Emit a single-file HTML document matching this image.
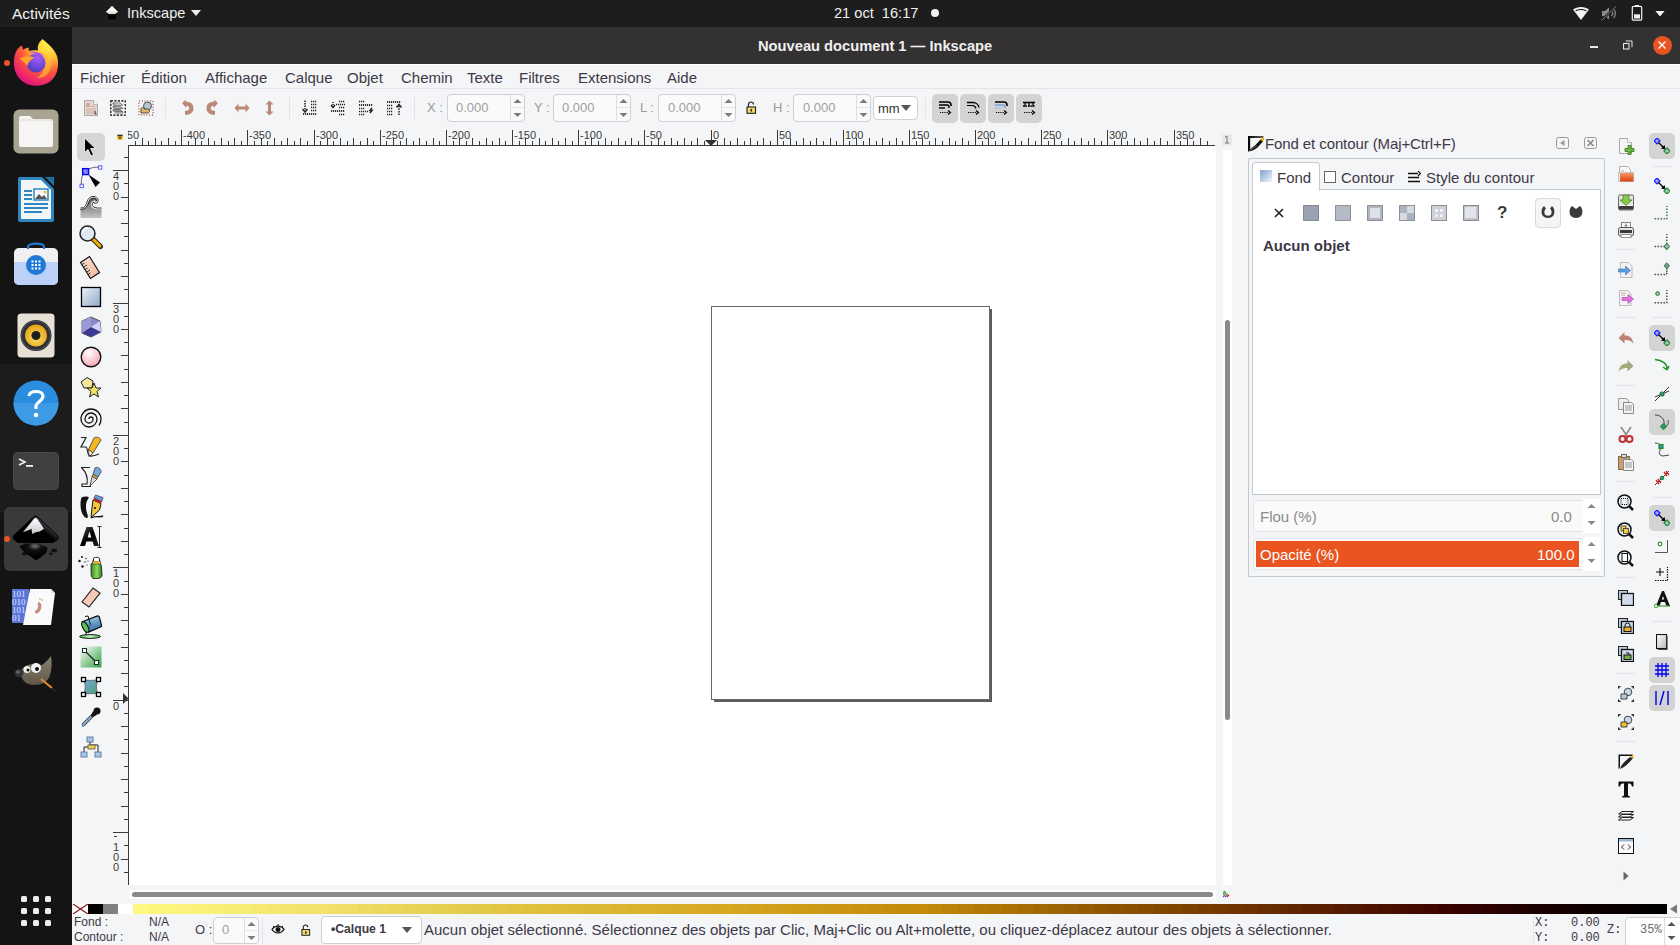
<!DOCTYPE html>
<html><head><meta charset="utf-8">
<style>
*{margin:0;padding:0;box-sizing:border-box}
html,body{width:1680px;height:945px;overflow:hidden;background:#f4f5f7;font-family:"Liberation Sans",sans-serif}
.a{position:absolute;display:block}
.t{position:absolute;white-space:pre;line-height:1}
.menu{font-size:15px;color:#3d3846;top:69.5px}
.inp{position:absolute;background:#fafafb;border:1px solid #cdd0d4;border-radius:4px}
.btn{position:absolute;background:#d3d3d3;border-radius:5px}
.sepv{position:absolute;width:1px;background:#e3e4e7}
.seph{position:absolute;height:1px;background:#e3e4e7}
</style></head>
<body>
<div class="a" style="left:0;top:0;width:1680px;height:27px;background:#1d1d1d"></div>
<div class="a" style="left:0;top:27px;width:72px;height:918px;background:#141414"></div>
<div class="a" style="left:72px;top:27px;width:1608px;height:37px;background:#333132"></div>
<div class="t" style="left:12px;top:6px;font-size:15.5px;color:#f0f0f0">Activités</div>
<div class="t" style="left:127px;top:6px;font-size:14.6px;color:#f0f0f0">Inkscape</div>
<svg class="a" style="left:104px;top:5px" width="16" height="16" viewBox="0 0 16 16"><path d="M8,1 L14,7 L11,9 L5,9 L2,7 Z" fill="#d8d8d8"/><path d="M8,1 L14,7 L12,8 C10,6 6,6 4,8 L2,7 Z" fill="#f8f8f8"/><path d="M2,7 L5,10 L11,10 L14,7 L12,12 L4,12 Z" fill="#000"/><ellipse cx="8" cy="13" rx="4" ry="1.5" fill="#000"/></svg>
<svg class="a" style="left:191px;top:10px" width="10" height="6" viewBox="0 0 10 6"><path d="M0,0 H10 L5,6 Z" fill="#eee"/></svg>
<div class="t" style="left:834px;top:6px;font-size:14.6px;color:#f0f0f0">21 oct  16:17</div>
<div class="a" style="left:931px;top:9px;width:8px;height:8px;border-radius:50%;background:#f0f0f0"></div>
<svg class="a" style="left:1572px;top:6px" width="18" height="15" viewBox="0 0 18 15"><path d="M1,3.5 C5,0 13,0 17,3.5 L9,14 Z" fill="#f2f2f2"/><path d="M3.3,4.5 C6.5,2.5 11.5,2.5 14.7,4.5 L14,5.2 C11,3.6 7,3.6 4,5.2 Z" fill="#1d1d1d"/></svg>
<svg class="a" style="left:1601px;top:6px" width="16" height="15" viewBox="0 0 16 15"><path d="M1,5 H4 L8,1.5 V13.5 L4,10 H1 Z" fill="#8a8a8a"/><path d="M10.5,5 C12,6.5 12,8.5 10.5,10 M12.5,3 C15,5.5 15,9.5 12.5,12" stroke="#8a8a8a" stroke-width="1.2" fill="none"/><path d="M0.5,14.5 L15,0.5" stroke="#1d1d1d" stroke-width="2.4"/><path d="M0.5,14.5 L15,0.5" stroke="#8a8a8a" stroke-width="0.9"/></svg>
<svg class="a" style="left:1631px;top:5px" width="12" height="16" viewBox="0 0 12 16"><rect x="4" y="0" width="4" height="1.6" fill="#f2f2f2"/><rect x="1.3" y="1.3" width="9.4" height="13.9" rx="1.3" fill="none" stroke="#f2f2f2" stroke-width="1.2"/><rect x="3" y="9.3" width="6" height="4.2" fill="#f2f2f2"/></svg>
<svg class="a" style="left:1655px;top:10.5px" width="10" height="5.5" viewBox="0 0 10 6"><path d="M0,0 H10 L5,6 Z" fill="#f2f2f2"/></svg>
<!-- title bar -->
<div class="t" style="left:758px;top:39px;font-size:14.7px;font-weight:bold;color:#f0f0f0">Nouveau document 1 — Inkscape</div>
<div class="a" style="left:1590px;top:46px;width:8px;height:2px;background:#e8e8e8"></div>
<svg class="a" style="left:1623px;top:40px" width="10" height="10" viewBox="0 0 10 10"><rect x="0.5" y="3.5" width="5.5" height="5.5" fill="none" stroke="#e8e8e8" stroke-width="1.1"/><path d="M2.8,1 H9 V7.2" fill="none" stroke="#e8e8e8" stroke-width="1"/></svg>
<div class="a" style="left:1652.5px;top:35.5px;width:19px;height:19px;border-radius:50%;background:#e95420"></div>
<svg class="a" style="left:1657px;top:40px" width="10" height="10" viewBox="0 0 10 10"><path d="M1.5,1.5 L8.5,8.5 M8.5,1.5 L1.5,8.5" stroke="#fff" stroke-width="1.3"/></svg>
<div class="a" style="left:0;top:364px;width:72px;height:149px;background:#1c1c1c"></div>
<div class="a" style="left:4px;top:507px;width:64px;height:64px;border-radius:6px;background:#3a3a3a"></div>
<div class="a" style="left:4px;top:60px;width:6px;height:6px;border-radius:50%;background:#e95420"></div>
<div class="a" style="left:4px;top:536px;width:6px;height:6px;border-radius:50%;background:#e95420"></div>
<!-- firefox -->
<svg class="a" style="left:0px;top:30px" width="72" height="64" viewBox="0 30 72 64">
<defs><radialGradient id="ffo" cx="0.75" cy="0.1" r="1.0"><stop offset="0" stop-color="#fff14a"/><stop offset="0.35" stop-color="#ffbd35"/><stop offset="0.6" stop-color="#ff5a36"/><stop offset="0.95" stop-color="#e6157e"/></radialGradient>
<radialGradient id="ffb" cx="0.6" cy="0.2" r="0.9"><stop offset="0" stop-color="#a45cff"/><stop offset="1" stop-color="#4a38b8"/></radialGradient></defs>
<path d="M42.5,39 C48,44 54,48 57,56 C60,66 57,78 48,83 C42,86 32,87 25,83 C17,78 13,70 14,60 C14.5,53 17,48 22,45.5 L23,50 C24,49 26,48 28.5,47.5 L29,51 C32,50 35,50 38,50.5 C37,46 39,42 42.5,39 Z" fill="url(#ffo)"/>
<path d="M40,52 C48,54 53,62 50,70 C48,75 43,78 37,78 C45,73 47,62 40,52 Z" fill="#ffb838" opacity="0.7"/>
<circle cx="36" cy="63" r="9.5" fill="url(#ffb)"/>
<path d="M19.5,58.5 C23,56 30,55 35,58 C31,59 28,62 27.5,66 C25,63 22,60 19.5,58.5 Z" fill="#ffa42a"/>
<path d="M30,52 C34,51 40,52 44,55.5 L40,55.5 C37,54 33,53 30,52Z" fill="#b54cf0"/>
</svg>
<!-- files -->
<svg class="a" style="left:13px;top:109px" width="46" height="45" viewBox="0 0 46 45">
<rect x="0.5" y="0.5" width="45" height="44" rx="6" fill="#a9a391"/>
<path d="M6,9 a2,2 0 0 1 2,-2 h9 l3,3 h18 a2,2 0 0 1 2,2 v24 a2,2 0 0 1 -2,2 h-30 a2,2 0 0 1 -2,-2 z" fill="#f6f5f3"/>
<path d="M6,11 h32 a2,2 0 0 1 2,2" fill="none" stroke="#dcd9d2" stroke-width="1"/>
</svg>
<!-- writer -->
<svg class="a" style="left:17px;top:176px" width="38" height="47" viewBox="0 0 38 47">
<path d="M3,1 h22 l12,12 v31 a2,2 0 0 1 -2,2 h-32 a2,2 0 0 1 -2,-2 v-41 a2,2 0 0 1 2,-2z" fill="#2e87c3"/>
<path d="M4,4 h20 l10,10 v29 h-30z" fill="#f3f5f7"/>
<path d="M28,1 h9 v9 z" fill="#1f6fa5"/>
<rect x="7" y="14" width="8" height="2" fill="#2e87c3"/><rect x="7" y="18" width="8" height="2" fill="#2e87c3"/><rect x="7" y="22" width="8" height="2" fill="#2e87c3"/>
<rect x="17" y="13" width="14" height="11" fill="#f8f8f8" stroke="#2e87c3" stroke-width="1.5"/>
<path d="M18,23 l4,-5 l3,3 l2,-2 l3,4z" fill="#555"/><circle cx="28" cy="16" r="1.6" fill="#f0c030"/>
<rect x="7" y="27" width="24" height="2" fill="#2e87c3"/><rect x="7" y="31" width="24" height="2" fill="#2e87c3"/><rect x="7" y="35" width="18" height="2" fill="#2e87c3"/>
</svg>
<!-- software -->
<svg class="a" style="left:13px;top:242px" width="46" height="44" viewBox="0 0 46 44">
<rect x="1" y="6" width="44" height="37" rx="5" fill="#f0f0f0"/>
<path d="M15,7 V5 C15,0.5 31,0.5 31,5 V7" fill="none" stroke="#1e7ad6" stroke-width="2.2"/>
<path d="M1,20 h44 v18 a5,5 0 0 1 -5,5 h-34 a5,5 0 0 1 -5,-5z" fill="#bcd0f8"/>
<circle cx="23" cy="23" r="10" fill="#1e7ad6"/>
<g fill="#fff"><rect x="18.5" y="18.5" width="2" height="2"/><rect x="22" y="18.5" width="2" height="2"/><rect x="25.5" y="18.5" width="2" height="2"/><rect x="18.5" y="22" width="2" height="2"/><rect x="22" y="22" width="2" height="2"/><rect x="25.5" y="22" width="2" height="2"/><rect x="18.5" y="25.5" width="2" height="2"/><rect x="22" y="25.5" width="2" height="2"/><rect x="25.5" y="25.5" width="2" height="2"/></g>
</svg>
<!-- rhythmbox -->
<svg class="a" style="left:17px;top:313px" width="38" height="45" viewBox="0 0 38 45">
<rect x="0.5" y="0.5" width="37" height="44" rx="4" fill="#e6e1d4"/>
<defs><radialGradient id="rbg" cx="0.5" cy="0.6" r="0.6"><stop offset="0" stop-color="#ffe070"/><stop offset="1" stop-color="#e0a010"/></radialGradient></defs>
<circle cx="19" cy="22.5" r="15.5" fill="#2e2e34"/>
<circle cx="19" cy="22.5" r="14.5" fill="none" stroke="#55555c" stroke-width="1"/>
<circle cx="19" cy="22.5" r="11" fill="url(#rbg)"/>
<circle cx="19" cy="22.5" r="4.5" fill="#1e1e1e"/>
</svg>
<!-- help -->
<svg class="a" style="left:13px;top:380px" width="46" height="46" viewBox="0 0 46 46">
<circle cx="23" cy="23" r="22.5" fill="#2b8de0"/>
<path d="M0.5,23 a22.5,22.5 0 0 0 45,0z" fill="#3d9be6"/>
<path d="M16,16 C16,10 30,10 30,16 C30,21 24,21 23,26 V29" fill="none" stroke="#fff" stroke-width="3.2"/>
<circle cx="23" cy="35" r="2.3" fill="#fff"/>
</svg>
<!-- terminal -->
<svg class="a" style="left:13px;top:452px" width="46" height="38" viewBox="0 0 46 38">
<rect x="0.5" y="0.5" width="45" height="37" rx="4" fill="#404040" stroke="#4a4a4a"/>
<path d="M6,7 l6,3 l-6,3" fill="none" stroke="#f2f2f2" stroke-width="1.6"/>
<rect x="13" y="13" width="7" height="1.8" fill="#f2f2f2"/>
</svg>
<!-- inkscape -->
<svg class="a" style="left:0px;top:500px" width="72" height="80" viewBox="0 500 72 80">
<defs><linearGradient id="ikr" x1="0.2" y1="0.8" x2="1" y2="0.2"><stop offset="0.5" stop-color="#000"/><stop offset="1" stop-color="#8a8ca8"/></linearGradient>
<linearGradient id="iks" x1="0" y1="0" x2="0" y2="1"><stop offset="0" stop-color="#fff"/><stop offset="1" stop-color="#c8c8cc"/></linearGradient>
<radialGradient id="ikp" cx="0.55" cy="0.15" r="0.6"><stop offset="0" stop-color="#777"/><stop offset="0.4" stop-color="#111"/><stop offset="1" stop-color="#000"/></radialGradient></defs>
<path d="M33.5,517 Q35.6,515 37.7,517 L57.5,535.5 Q59.5,538 57,540 L53,542.5 L18,542.5 L14.5,540 Q12,538 13.8,535.5 Z" fill="url(#ikr)" stroke="#000" stroke-width="1"/>
<path d="M34.2,518.5 Q35.6,517.3 37,518.5 L44,528.8 L39.8,531.4 L35.6,532.2 L32.2,533.9 L31.4,528.8 L29.7,529.7 L22.9,532.2 Z" fill="url(#iks)"/>
<path d="M19.5,546.2 L25.4,543.5 L38,543.5 L47.5,547.5 L46.6,552.5 L40.7,557.6 L35.6,560.6 L32.2,557.6 L28,555 L22.9,550.8 Z" fill="url(#ikp)"/>
<ellipse cx="24.6" cy="553.8" rx="2.8" ry="1.8" fill="#111"/><ellipse cx="54.2" cy="550.4" rx="3" ry="1.8" fill="#111"/><ellipse cx="50.8" cy="553.8" rx="1.8" ry="1.3" fill="#111"/>
</svg>
<!-- binary doc -->
<svg class="a" style="left:11px;top:588px" width="46" height="40" viewBox="0 0 46 40">
<rect x="1" y="1" width="17" height="34" fill="#5b74d8"/>
<g font-family="Liberation Serif" font-size="9" fill="#dfe6ff"><text x="1" y="9">101</text><text x="1" y="17">010</text><text x="1" y="25">101</text><text x="1" y="33">01</text></g>
<path d="M19,1 H40 L44,5 L40,37 H12z" fill="#fafafa"/>
<path d="M40,1 L44,5 H40z" fill="#ddd"/>
<path d="M28,14 c3,1 3,6 1,9 c-2,3 -5,3 -5,1 c0,-2 3,-2 3,-5 c0,-2 -1,-4 1,-5z" fill="#c58a7a"/>
<circle cx="29" cy="11" r="1" fill="#d8c090"/><circle cx="31" cy="12" r="1" fill="#d8c090"/>
</svg>
<!-- gimp -->
<svg class="a" style="left:12px;top:655px" width="46" height="38" viewBox="0 0 46 38">
<defs><linearGradient id="gmg" x1="0" y1="0" x2="0" y2="1"><stop offset="0" stop-color="#8a8270"/><stop offset="1" stop-color="#5e5648"/></linearGradient></defs>
<path d="M10,14 C14,9 22,8 30,10 C34,7 37,4 39,1 C40,8 40,14 38,20 C36,27 30,30 22,30 C15,30 10,26 9,20z" fill="url(#gmg)"/>
<ellipse cx="7" cy="18" rx="4.5" ry="4" fill="#333"/><ellipse cx="6" cy="17" rx="2" ry="1.5" fill="#666"/>
<circle cx="15" cy="14.5" r="3.5" fill="#eee"/><circle cx="24" cy="13" r="5" fill="#f4f4f4"/>
<circle cx="16" cy="15" r="1.5" fill="#111"/><circle cx="25" cy="14" r="2" fill="#111"/>
<path d="M29,24 L40,33" stroke="#e08a30" stroke-width="2.2"/><path d="M40,33 L44,37" stroke="#222" stroke-width="2.2"/>
</svg>
<!-- apps grid -->
<g></g>
<div class="a" style="left:21px;top:896px;width:6px;height:6px;border-radius:1.5px;background:#eeeeec"></div>
<div class="a" style="left:33px;top:896px;width:6px;height:6px;border-radius:1.5px;background:#eeeeec"></div>
<div class="a" style="left:45px;top:896px;width:6px;height:6px;border-radius:1.5px;background:#eeeeec"></div>
<div class="a" style="left:21px;top:908px;width:6px;height:6px;border-radius:1.5px;background:#eeeeec"></div>
<div class="a" style="left:33px;top:908px;width:6px;height:6px;border-radius:1.5px;background:#eeeeec"></div>
<div class="a" style="left:45px;top:908px;width:6px;height:6px;border-radius:1.5px;background:#eeeeec"></div>
<div class="a" style="left:21px;top:920px;width:6px;height:6px;border-radius:1.5px;background:#eeeeec"></div>
<div class="a" style="left:33px;top:920px;width:6px;height:6px;border-radius:1.5px;background:#eeeeec"></div>
<div class="a" style="left:45px;top:920px;width:6px;height:6px;border-radius:1.5px;background:#eeeeec"></div>
<div class="a" style="left:72px;top:64px;width:1608px;height:1px;background:#ffffff"></div>
<div class="a" style="left:72px;top:88px;width:1608px;height:1px;background:#e4e5e8"></div>
<div class="t menu" style="left:80px">Fichier</div>
<div class="t menu" style="left:141px">Édition</div>
<div class="t menu" style="left:205px">Affichage</div>
<div class="t menu" style="left:285px">Calque</div>
<div class="t menu" style="left:347px">Objet</div>
<div class="t menu" style="left:401px">Chemin</div>
<div class="t menu" style="left:467px">Texte</div>
<div class="t menu" style="left:519px">Filtres</div>
<div class="t menu" style="left:578px">Extensions</div>
<div class="t menu" style="left:667px">Aide</div>
<!-- toolbar icons -->
<svg class="a" style="left:83px;top:100px" width="16" height="16" viewBox="0 0 16 16"><path d="M1.5,0.5 h9 l4,4 v11 h-13z" fill="#e9d6cd" stroke="#a9a9a9"/><path d="M10.5,0.5 v4 h4" fill="#fff" stroke="#b0b0b0"/><g fill="#c9aea2"><rect x="3" y="3" width="4" height="4"/><rect x="8" y="6" width="4" height="1"/><rect x="3" y="8.5" width="10" height="1"/><rect x="3" y="10.5" width="10" height="1"/><rect x="3" y="12.5" width="8" height="1"/></g><path d="M12,11 v3 h1.5" stroke="#333" fill="none"/></svg>
<svg class="a" style="left:110px;top:100px" width="16" height="16" viewBox="0 0 16 16"><defs><linearGradient id="slb" x1="0" y1="0" x2="0" y2="1"><stop offset="0" stop-color="#fff"/><stop offset="1" stop-color="#8a8a8a"/></linearGradient></defs><rect x="0.8" y="0.8" width="14.4" height="14.4" fill="none" stroke="#000" stroke-width="1.2" stroke-dasharray="2.2,1.3"/><path d="M3,3 H10 L12.8,5.2 H5.8z M3,6.3 H10 L12.8,8.5 H5.8z M3,9.6 H10 L12.8,11.8 H5.8z" fill="url(#slb)" stroke="#555" stroke-width="0.8"/><path d="M3,3 V4.3 L5.8,6.5 M3,6.3 V7.6 L5.8,9.8 M3,9.6 V10.9 L5.8,13.1 H12.8 V11.8" fill="none" stroke="#666" stroke-width="0.8"/></svg>
<svg class="a" style="left:138px;top:100px" width="16" height="16" viewBox="0 0 16 16"><rect x="1" y="1" width="14" height="14" fill="none" stroke="#8b1010" stroke-width="1" stroke-dasharray="1,1.8"/><circle cx="9.5" cy="6" r="4" fill="#b7c4d4" stroke="#444" stroke-width="0.9"/><path d="M3,12 v-3 c0,-2 3,-2 3,0 h4 c2,0 2,4 0,4 h-7z" fill="#d8b860" stroke="#444" stroke-width="0.9"/></svg>
<div class="sepv" style="left:165px;top:97px;height:22px"></div>
<svg class="a" style="left:180px;top:99px" width="14" height="17" viewBox="0 0 14 17" opacity="0.78"><path d="M2,4 l4,-3.5 v2.2 c5,0 7.5,2.5 7.5,6.5 s-3,6.5 -7.5,6.5 h-1 v-4 h1.2 c2,0 3,-1 3,-2.5 s-1,-2.5 -3,-2.5 v2.2z" fill="#b06a55"/></svg>
<svg class="a" style="left:206px;top:99px" width="14" height="17" viewBox="0 0 14 17" opacity="0.78"><path d="M12,4 l-4,-3.5 v2.2 c-5,0 -7.5,2.5 -7.5,6.5 s3,6.5 7.5,6.5 h1 v-4 h-1.2 c-2,0 -3,-1 -3,-2.5 s1,-2.5 3,-2.5 v2.2z" fill="#b06a55"/></svg>
<svg class="a" style="left:234px;top:103px" width="16" height="10" viewBox="0 0 16 10" opacity="0.78"><path d="M0.5,5 l4,-4.5 v3 h7 v-3 l4,4.5 l-4,4.5 v-3 h-7 v3z" fill="#b06a55"/></svg>
<svg class="a" style="left:265px;top:100px" width="9" height="16" viewBox="0 0 9 16" opacity="0.78"><path d="M4.5,0.5 l4,4 h-2.5 v7 h2.5 l-4,4 l-4,-4 h2.5 v-7 h-2.5z" fill="#b06a55"/></svg>
<div class="sepv" style="left:289px;top:97px;height:22px"></div>
<svg class="a" style="left:302px;top:100px" width="16" height="16" viewBox="0 0 16 16" fill="none" stroke="#222" stroke-width="1.5"><path d="M3,0.5 v10" stroke-dasharray="1.5,1"/><path d="M0.5,9 l2.5,3 l2.5,-3" /><path d="M9,1.5 h6 M9,4.5 h6 M9,7.5 h6 M9,10.5 h6" stroke-dasharray="1.2,0.8"/><path d="M1,14 h14" stroke="#333" stroke-width="2" stroke-dasharray="1.2,0.8"/></svg>
<svg class="a" style="left:330px;top:100px" width="16" height="16" viewBox="0 0 16 16" fill="none" stroke="#222" stroke-width="1.5"><path d="M9,1.5 h6 M6,4.5 h9 M9,7.5 h6 M9,14.5 h6" stroke-dasharray="1.2,0.8"/><path d="M3,2 v5" stroke-dasharray="1,1"/><path d="M1,5 l2,2.5 l2,-2.5"/><path d="M1,11 h14" stroke="#333" stroke-width="2" stroke-dasharray="1.2,0.8"/></svg>
<svg class="a" style="left:358px;top:100px" width="16" height="16" viewBox="0 0 16 16" fill="none" stroke="#222" stroke-width="1.5"><path d="M1,1.5 h6 M1,8.5 h6 M1,11.5 h9 M1,14.5 h6" stroke-dasharray="1.2,0.8"/><path d="M1,5 h14" stroke="#333" stroke-width="2" stroke-dasharray="1.2,0.8"/><path d="M12,13 l2,-2.5 l-2,0 l2,-2.5" /></svg>
<svg class="a" style="left:386px;top:100px" width="16" height="16" viewBox="0 0 16 16" fill="none" stroke="#222" stroke-width="1.5"><path d="M1,2 h14" stroke="#333" stroke-width="2" stroke-dasharray="1.2,0.8"/><path d="M1,5.5 h6 M1,8.5 h6 M1,11.5 h6 M1,14.5 h6" stroke-dasharray="1.2,0.8"/><path d="M13,6 v9.5" stroke-dasharray="1.5,1"/><path d="M10.5,7.5 l2.5,-3 l2.5,3"/></svg>
<div class="sepv" style="left:414px;top:97px;height:22px"></div>
<!-- XYWH -->
<div class="t" style="left:427px;top:101px;font-size:13px;color:#9a9a9a">X :</div>
<div class="inp" style="left:447px;top:94px;width:78px;height:28px"></div>
<div class="t" style="left:456px;top:101px;font-size:13px;color:#a0a0a0">0.000</div>
<div class="a" style="left:510px;top:95px;width:1px;height:25px;background:#dcdde0"></div>
<div class="a" style="left:511px;top:107px;width:13px;height:1px;background:#e6e7ea"></div>
<svg class="a" style="left:513px;top:98px" width="9" height="20" viewBox="0 0 9 20"><path d="M0.5,5 L4.5,1 L8.5,5z M0.5,15 L4.5,19 L8.5,15z" fill="#7b7b7b"/></svg>
<div class="t" style="left:534px;top:101px;font-size:13px;color:#9a9a9a">Y :</div>
<div class="inp" style="left:553px;top:94px;width:78px;height:28px"></div>
<div class="t" style="left:562px;top:101px;font-size:13px;color:#a0a0a0">0.000</div>
<div class="a" style="left:616px;top:95px;width:1px;height:25px;background:#dcdde0"></div>
<div class="a" style="left:617px;top:107px;width:13px;height:1px;background:#e6e7ea"></div>
<svg class="a" style="left:619px;top:98px" width="9" height="20" viewBox="0 0 9 20"><path d="M0.5,5 L4.5,1 L8.5,5z M0.5,15 L4.5,19 L8.5,15z" fill="#7b7b7b"/></svg>
<div class="t" style="left:640px;top:101px;font-size:13px;color:#9a9a9a">L :</div>
<div class="inp" style="left:658px;top:94px;width:78px;height:28px"></div>
<div class="t" style="left:668px;top:101px;font-size:13px;color:#a0a0a0">0.000</div>
<div class="a" style="left:721px;top:95px;width:1px;height:25px;background:#dcdde0"></div>
<div class="a" style="left:722px;top:107px;width:13px;height:1px;background:#e6e7ea"></div>
<svg class="a" style="left:724px;top:98px" width="9" height="20" viewBox="0 0 9 20"><path d="M0.5,5 L4.5,1 L8.5,5z M0.5,15 L4.5,19 L8.5,15z" fill="#7b7b7b"/></svg>
<svg class="a" style="left:746px;top:101px" width="11" height="13" viewBox="0 0 11 13"><path d="M2.5,6 v-2.5 a2.5,2.5 0 0 1 5,0" fill="none" stroke="#222" stroke-width="1.2"/><rect x="1" y="6" width="8.5" height="6.3" fill="#f5dc6a" stroke="#222" stroke-width="1.1"/><rect x="4.5" y="8" width="1.6" height="2.5" fill="#222"/></svg>
<div class="t" style="left:773px;top:101px;font-size:13px;color:#9a9a9a">H :</div>
<div class="inp" style="left:793px;top:94px;width:78px;height:28px"></div>
<div class="t" style="left:803px;top:101px;font-size:13px;color:#a0a0a0">0.000</div>
<div class="a" style="left:856px;top:95px;width:1px;height:25px;background:#dcdde0"></div>
<div class="a" style="left:857px;top:107px;width:13px;height:1px;background:#e6e7ea"></div>
<svg class="a" style="left:859px;top:98px" width="9" height="20" viewBox="0 0 9 20"><path d="M0.5,5 L4.5,1 L8.5,5z M0.5,15 L4.5,19 L8.5,15z" fill="#7b7b7b"/></svg>
<div class="a" style="left:873px;top:96px;width:45px;height:24px;background:#fff;border:1px solid #cdd0d4;border-radius:4px"></div>
<div class="t" style="left:878px;top:102px;font-size:13px;color:#333">mm</div>
<svg class="a" style="left:901px;top:105px" width="10" height="6" viewBox="0 0 10 6"><path d="M0,0 H10 L5,6 Z" fill="#555"/></svg>
<div class="sepv" style="left:925px;top:97px;height:22px"></div>
<div class="btn" style="left:932px;top:94px;width:26px;height:29px"></div>
<div class="btn" style="left:960px;top:94px;width:26px;height:29px"></div>
<div class="btn" style="left:988px;top:94px;width:26px;height:29px"></div>
<div class="btn" style="left:1016px;top:94px;width:26px;height:29px"></div>
<svg class="a" style="left:937px;top:100px" width="16" height="16" viewBox="0 0 16 16" fill="none" stroke="#000"><path d="M2,2 h9 a3,3 0 0 1 3,3 v1" stroke-width="1.6"/><path d="M2,5 h8 a2,2 0 0 1 2,2 v1" stroke-width="1.4"/><path d="M2,8 h6" stroke-width="1.4"/><path d="M3,12.5 h9" stroke-dasharray="1.2,1" stroke-width="1.2"/><path d="M11,10.5 l2.5,2 l-2.5,2" stroke-width="1.2"/></svg>
<svg class="a" style="left:965px;top:100px" width="16" height="16" viewBox="0 0 16 16" fill="none" stroke="#000"><path d="M2,2.5 h6 a6,6 0 0 1 6,5" stroke-width="1.3"/><path d="M2,5.5 h5 a4,4 0 0 1 4,3" stroke-width="1.2"/><path d="M3,12.5 h9" stroke-dasharray="1.2,1" stroke-width="1.2"/><path d="M11,10.5 l2.5,2 l-2.5,2" stroke-width="1.2"/></svg>
<svg class="a" style="left:993px;top:100px" width="16" height="16" viewBox="0 0 16 16" fill="none" stroke="#000"><path d="M2,2 h9 a3,3 0 0 1 3,3 v1" stroke-width="1.6"/><path d="M2,5 h8 a2,2 0 0 1 2,2 v1" stroke="#8fb0d8" stroke-width="2"/><path d="M2,8 h6" stroke="#aac4e4" stroke-width="1.4"/><path d="M3,12.5 h9" stroke-dasharray="1.2,1" stroke-width="1.2"/><path d="M11,10.5 l2.5,2 l-2.5,2" stroke-width="1.2"/></svg>
<svg class="a" style="left:1021px;top:100px" width="16" height="16" viewBox="0 0 16 16" fill="none" stroke="#000"><path d="M2,2.5 h12" stroke-width="1.6"/><path d="M2,6 h12" stroke-width="1.6" stroke-dasharray="1.5,1"/><path d="M4,2 v5 M8,2 v5 M12,2 v5" stroke-width="1.2"/><path d="M3,12.5 h9" stroke-dasharray="1.2,1" stroke-width="1.2"/><path d="M11,10.5 l2.5,2 l-2.5,2" stroke-width="1.2"/></svg>
<!-- canvas -->
<div class="a" style="left:128px;top:146px;width:1088px;height:739px;background:#fff"></div>
<div class="a" style="left:711px;top:306px;width:279px;height:394px;border:1px solid #666;background:#fff"></div>
<div class="a" style="left:990px;top:309px;width:2px;height:393px;background:#5c5c5c"></div>
<div class="a" style="left:714px;top:700px;width:276px;height:2px;background:#5c5c5c"></div>
<!-- corner lock icon -->
<svg class="a" style="left:117px;top:134px" width="6" height="6" viewBox="0 0 8 8"><rect x="0.5" y="1" width="7" height="6.5" fill="#f0a800"/><rect x="0.5" y="1" width="7" height="2" fill="#333"/><rect x="3" y="4" width="2" height="2.5" fill="#333"/></svg>
<!-- v scrollbar -->
<div class="a" style="left:1223px;top:150px;width:9px;height:735px;background:#fff"></div>
<div class="a" style="left:1225px;top:320px;width:5px;height:400px;border-radius:3px;background:#898989"></div>
<svg class="a" style="left:1221px;top:134px" width="12" height="12" viewBox="0 0 12 12"><rect x="1" y="0.5" width="10" height="11" rx="1" fill="#e8e8e8"/><path d="M4,3 l2,-1 v7 M4,9 h4" stroke="#777" fill="none"/></svg>
<!-- h scrollbar -->
<div class="a" style="left:129px;top:890px;width:1087px;height:9px;background:#fff"></div>
<div class="a" style="left:132px;top:892px;width:1081px;height:5px;border-radius:3px;background:#898989"></div>
<svg class="a" style="left:1223px;top:890px" width="8" height="8" viewBox="0 0 8 8"><circle cx="1.5" cy="1.5" r="0.8" fill="#20a040"/><circle cx="0.5" cy="2.5" r="0.8" fill="#20a040"/><circle cx="2.5" cy="2.5" r="0.8" fill="#40b040"/><circle cx="1.5" cy="3.5" r="0.8" fill="#30a050"/><circle cx="0.5" cy="4.5" r="0.8" fill="#20a0a0"/><circle cx="3.5" cy="3.5" r="0.8" fill="#a0b030"/><circle cx="2.5" cy="4.5" r="0.7" fill="#80a060"/><circle cx="4.5" cy="4.5" r="0.8" fill="#d06020"/><circle cx="1.5" cy="5.5" r="0.7" fill="#4080c0"/><circle cx="3.5" cy="5.5" r="0.8" fill="#c03060"/><circle cx="5.5" cy="5.5" r="0.8" fill="#d02030"/><circle cx="0.5" cy="6.5" r="0.8" fill="#2050c0"/><circle cx="2.5" cy="6.5" r="0.8" fill="#a030c0"/><circle cx="4.5" cy="6.5" r="0.8" fill="#c01060"/></svg>
<!-- toolbox -->
<div class="btn" style="left:77px;top:133px;width:28px;height:28px;background:#d5d5d5"></div>
<svg class="a" style="left:83px;top:137px" width="16" height="20" viewBox="0 0 16 20"><path d="M1.5,1 L1.5,15.5 L5,12.5 L8,19 L10.5,17.8 L7.6,11.5 L12.5,11.5 Z" fill="#000" stroke="#fff" stroke-width="0.8"/></svg>
<svg class="a" style="left:76px;top:162px" width="30" height="28" viewBox="76 162 30 28"><path d="M89,169 C92,167.5 95,167 98.5,167.2 M82.5,175 C81.5,178 81,181 81.5,184.5" fill="none" stroke="#555" stroke-width="0.9"/><rect x="82.7" y="168.7" width="5.8" height="5.8" fill="#9a9af0" stroke="#0000ff" stroke-width="1.5"/><path d="M84,173.5 L87.5,170" stroke="#4040c0" stroke-width="0.7"/><rect x="98.5" y="165.8" width="3.4" height="3.4" fill="none" stroke="#6060ff" stroke-width="1"/><rect x="80" y="184.2" width="3.4" height="3.4" fill="none" stroke="#6060ff" stroke-width="1"/><path d="M88.5,174.5 L100,182.5 L95.5,187 Z" fill="#000"/></svg>
<svg class="a" style="left:76px;top:192px" width="30" height="28" viewBox="76 192 30 28"><defs><linearGradient id="tw" x1="0" y1="0" x2="0" y2="1"><stop offset="0" stop-color="#555"/><stop offset="1" stop-color="#c4c4c4"/></linearGradient></defs><path d="M80.5,208 C84,208 86,206 87,202 C88,198 91,196 94,196.5 C98,197 99,200.5 97.5,202.5 C96,204 94,203.5 94,202 C92,202.5 91.5,205 93,206.5 C95,208.5 99,208 101.5,208 V218 H80.5z" fill="url(#tw)"/><path d="M80.5,208 C84,208 86,206 87,202 C88,198 91,196 94,196.5 C98,197 99,200.5 97.5,202.5 C96,204 94,203.5 94,202 C92,202.5 91.5,205 93,206.5 C95,208.5 99,208 101.5,208" fill="none" stroke="#fff" stroke-width="2.6"/><path d="M80.5,208 C84,208 86,206 87,202 C88,198 91,196 94,196.5 C98,197 99,200.5 97.5,202.5 C96,204 94,203.5 94,202 C92,202.5 91.5,205 93,206.5 C95,208.5 99,208 101.5,208" fill="none" stroke="#111" stroke-width="0.9"/><path d="M80.5,209.5 C84,209.5 87,207.5 88.5,203 C89.5,199.5 91.5,198 94,198.2 C96,198.5 97,199.5 96.5,201" fill="none" stroke="#111" stroke-width="0.8"/></svg>
<svg class="a" style="left:78px;top:224px" width="26" height="26" viewBox="0 0 26 26"><path d="M14.5,14.5 L22.5,22.5" stroke="#222" stroke-width="5" stroke-linecap="round"/><path d="M15.5,15.5 L22,22" stroke="#f5b000" stroke-width="3" stroke-linecap="round"/><circle cx="9.5" cy="9.5" r="7.5" fill="#dde8f0" stroke="#222" stroke-width="1.5"/><path d="M5,8 a4.5,4.5 0 0 1 4.5,-4" stroke="#fff" stroke-width="1.5" fill="none"/></svg>
<svg class="a" style="left:76px;top:252px" width="30" height="30" viewBox="76 252 30 30"><defs><linearGradient id="msg" x1="0" y1="0" x2="1" y2="1"><stop offset="0" stop-color="#fbe4d8"/><stop offset="1" stop-color="#f0b49a"/></linearGradient></defs><path d="M80.5,262.5 L89.5,256.5 L99.5,272.5 L90.5,278.5 Z" fill="url(#msg)" stroke="#111" stroke-width="1.2"/><path d="M82,264.5 l2.5,-1.5 M83.5,267 l3.5,-2 M85,269.5 l2.5,-1.5 M86.5,272 l3.5,-2 M88,274.5 l2.5,-1.5" stroke="#222" stroke-width="0.9"/></svg>
<svg class="a" style="left:80px;top:286px" width="22" height="22" viewBox="0 0 22 22"><defs><linearGradient id="rg" x1="0" y1="0" x2="1" y2="1"><stop offset="0" stop-color="#eef3f8"/><stop offset="1" stop-color="#8aa8c8"/></linearGradient></defs><rect x="1.5" y="1.5" width="19" height="19" fill="url(#rg)" stroke="#000" stroke-width="1.3"/></svg>
<svg class="a" style="left:80px;top:316px" width="22" height="22" viewBox="0 0 22 22"><path d="M2,5 L11,1 L20,5 L21,16 L11,21 L2,17z" fill="#8888c8" stroke="#555" stroke-width="1"/><path d="M11,11 L20,5 L21,16 L11,21z" fill="#d0d0f8"/><path d="M2,17 L11,11 L21,16 L11,21z" fill="#3a3a90"/><path d="M2,5 L11,1 L11,11 L2,17z" fill="#9a9ad8"/></svg>
<svg class="a" style="left:80px;top:346px" width="22" height="22" viewBox="0 0 22 22"><defs><radialGradient id="eg" cx="0.4" cy="0.3" r="0.8"><stop offset="0" stop-color="#fff"/><stop offset="1" stop-color="#f59aa8"/></radialGradient></defs><circle cx="11" cy="11" r="9.8" fill="url(#eg)" stroke="#111" stroke-width="1.4"/></svg>
<svg class="a" style="left:80px;top:376px" width="22" height="22" viewBox="0 0 22 22"><path d="M1,6 L7,1.5 L13,5 L12,12 L4,12z" fill="#f5e69a" stroke="#222" stroke-width="1"/><path d="M14,7 L16,12 L21,12 L17,15.5 L18.5,21 L14,18 L9.5,21 L11,15.5 L7,12 L12,12z" fill="#f0e060" stroke="#222" stroke-width="1"/></svg>
<svg class="a" style="left:80px;top:406px" width="23" height="23" viewBox="0 0 23 23"><path d="M9,13 A2,2 0 0 1 13,13 A4,4 0 0 1 5,13 A6,6 0 0 1 17,13 A8,8 0 0 1 1,13 A10,10 0 0 1 21,13 A11.5,11.5 0 0 1 19,19.5" fill="none" stroke="#111" stroke-width="1.3"/></svg>
<svg class="a" style="left:80px;top:436px" width="22" height="22" viewBox="0 0 22 22"><path d="M1,1.5 H6 L1,11 H6 C8,12 7,17 9,19.5 C11,21 14,20 19,18" fill="none" stroke="#222" stroke-width="1.2"/><path d="M14,2 C15,0.5 20,1 21,4 L13,17 L8.5,13.5z" fill="#f5b820" stroke="#333" stroke-width="0.8"/><path d="M8.5,13.5 L13,17 L9,20.5z" fill="#fff8e0" stroke="#333" stroke-width="0.8"/><path d="M9,20.5 L10,18.5 L11,19.5z" fill="#111"/></svg>
<svg class="a" style="left:80px;top:466px" width="22" height="22" viewBox="0 0 22 22"><path d="M1,1.5 H10 M1.5,1.5 C6,6 8,12 7,18 H2 V20.5 H11" fill="none" stroke="#222" stroke-width="1.2"/><path d="M15,2 C17,0.5 21,2 21,6 L18,11 L13,8.5z" fill="#78aad8" stroke="#335" stroke-width="0.8"/><path d="M13,8.5 L18,11 L17,13 L12,10.5z" fill="#f0c030" stroke="#333" stroke-width="0.7"/><path d="M12,10.5 L17,13 L10,20z" fill="#ddd" stroke="#333" stroke-width="0.8"/></svg>
<svg class="a" style="left:76px;top:494px" width="30" height="26" viewBox="76 494 30 26"><path d="M81.5,497.5 C84,496 88,496 89,497.5 C86,501 85,507 87,513 C88,516 88.5,518 86.5,518 C83,517 80.5,511 80.5,505 C80.5,501 81,499 81.5,497.5z" fill="#111"/><path d="M93,500 L101,503.5 L99.5,510 L91,517.5 L92,508z" fill="#f2c83a" stroke="#111" stroke-width="1"/><path d="M93,500 L101,503.5 L101.8,501.5 L94,498z" fill="#d42020"/><path d="M94,498 L101.8,501.5 L103,497.5 L95.5,495z" fill="#6a9cd0" stroke="#223" stroke-width="0.6"/><circle cx="95" cy="508" r="1" fill="#111"/><path d="M91,518 C95,515 99,518 103,516" fill="none" stroke="#111" stroke-width="1.4"/></svg>
<svg class="a" style="left:76px;top:524px" width="30" height="26" viewBox="76 524 30 26"><defs><linearGradient id="tag" x1="0" y1="0" x2="1" y2="1"><stop offset="0" stop-color="#555"/><stop offset="0.5" stop-color="#000"/><stop offset="1" stop-color="#222"/></linearGradient></defs><path d="M80,546 L86.5,527 H92.5 L99,546 H94 L92.6,541.5 H86.4 L85,546z M87.6,537.5 H91.4 L89.5,531.5z" fill="url(#tag)"/><path d="M97.5,526.5 H101.5 M99.5,526.5 V547.5 M97.5,547.5 H101.5" stroke="#111" stroke-width="0.9" fill="none"/></svg>
<svg class="a" style="left:76px;top:554px" width="30" height="26" viewBox="76 554 30 26"><defs><linearGradient id="spg" x1="0" y1="0" x2="1" y2="0"><stop offset="0" stop-color="#3a8a20"/><stop offset="0.55" stop-color="#8ad860"/><stop offset="1" stop-color="#2a7a18"/></linearGradient></defs><g fill="#111"><circle cx="82" cy="557" r="1"/><circle cx="79.5" cy="561" r="1.2"/><circle cx="82.5" cy="566.5" r="1.2"/><circle cx="86" cy="558.5" r="0.7"/><circle cx="85" cy="562" r="0.7"/><circle cx="88" cy="561" r="0.6"/><circle cx="87" cy="565" r="0.6"/></g><path d="M91,565 C91,563 93,562 95,562 H97 C100,562 101,564 101.5,567 L102,575 C102,577.5 100,578.5 97,578.5 H94 C92,578.5 91.5,577 91.2,575z" fill="url(#spg)" stroke="#222" stroke-width="0.9"/><rect x="92.5" y="561" width="8" height="3" fill="#f0c040" stroke="#333" stroke-width="0.6"/><path d="M93.5,561 V558.5 C93.5,557 99.5,557 99.5,558.5 V561" fill="#fff" stroke="#111" stroke-width="1"/></svg>
<svg class="a" style="left:80px;top:586px" width="22" height="22" viewBox="0 0 22 22"><path d="M2,16 L13,2 L20,7 L9,21z" fill="#f8c8b8" stroke="#222" stroke-width="1.2"/></svg>
<svg class="a" style="left:72px;top:600px" width="40" height="42" viewBox="72 600 40 42"><defs><linearGradient id="bkg" x1="0" y1="0" x2="0.3" y2="1"><stop offset="0" stop-color="#d8f0f8"/><stop offset="0.4" stop-color="#78b0d0"/><stop offset="1" stop-color="#3a6aa8"/></linearGradient><linearGradient id="bkp" x1="0" y1="0" x2="1" y2="0"><stop offset="0" stop-color="#48b048"/><stop offset="0.5" stop-color="#c8f0c8"/><stop offset="1" stop-color="#48b048"/></linearGradient></defs><path d="M82.3,621.7 L97.4,615.9 Q99,616 99.5,617.5 L101.6,625.5 Q101.8,626.5 100.5,627 L88.4,632.3 Z" fill="url(#bkg)" stroke="#000" stroke-width="1.1"/><ellipse cx="85.3" cy="627" rx="2.6" ry="5.8" transform="rotate(-28 85.3 627)" fill="#58c058" stroke="#000" stroke-width="1"/><path d="M85,616.5 L88,616 L90.5,624.5" fill="none" stroke="#111" stroke-width="1"/><circle cx="90.3" cy="625.3" r="1" fill="#555"/><path d="M86,632 C86.5,634 86,634.5 85,635" stroke="#000" stroke-width="1" fill="none"/><ellipse cx="90" cy="636.5" rx="10.5" ry="1.9" fill="url(#bkp)" stroke="#000" stroke-width="0.9"/></svg>
<svg class="a" style="left:80px;top:646px" width="22" height="22" viewBox="0 0 22 22"><defs><linearGradient id="gg" x1="0" y1="0" x2="1" y2="1"><stop offset="0" stop-color="#ffffff"/><stop offset="1" stop-color="#30a040"/></linearGradient></defs><rect x="0.5" y="0.5" width="21" height="21" fill="url(#gg)"/><path d="M5,5 L16,16" stroke="#222" stroke-width="1.2"/><rect x="2.5" y="2.5" width="4" height="4" fill="#fff" stroke="#222"/><rect x="14.5" y="14.5" width="4" height="4" fill="#fff" stroke="#222"/></svg>
<svg class="a" style="left:76px;top:672px" width="30" height="30" viewBox="76 672 30 30"><defs><linearGradient id="mg" x1="0" y1="0" x2="1" y2="1"><stop offset="0" stop-color="#78a8d8"/><stop offset="1" stop-color="#4aa070"/></linearGradient></defs><path d="M83.5,679.5 C88,681 93,680.5 98.5,679.5 C96,684 95.5,689 98.5,694.5 C94,693 89,693.5 83.5,694.5 C85.5,690 86,684.5 83.5,679.5 Z" fill="url(#mg)" stroke="#334" stroke-width="0.6"/><g fill="#fff" stroke="#000" stroke-width="1.3"><rect x="81.5" y="677.5" width="4" height="4"/><rect x="96.5" y="677.5" width="4" height="4"/><rect x="81.5" y="692.5" width="4" height="4"/><rect x="96.5" y="692.5" width="4" height="4"/></g></svg>
<svg class="a" style="left:80px;top:706px" width="22" height="22" viewBox="0 0 22 22"><path d="M3,19 L14,8" stroke="#333" stroke-width="3.5"/><path d="M3,19 L14,8" stroke="#8ab0d8" stroke-width="2"/><path d="M13,5 L17,9 L12,11 L11,10z" fill="#111"/><circle cx="17" cy="5" r="3.5" fill="#111"/><path d="M2,18 C1,20 2,21 3,21 C4,21 4,20 3,18z" fill="#5090c0"/></svg>
<svg class="a" style="left:80px;top:736px" width="22" height="22" viewBox="0 0 22 22"><rect x="7" y="1" width="6" height="5" fill="#a8c8e8" stroke="#4a6a90" stroke-width="0.8"/><path d="M10,6 V9 M4,11 V16 M18,9 V16 M10,9 H18 M4,11 H8" stroke="#222" fill="none"/><rect x="8" y="9" width="7" height="4" fill="#f0d040" stroke="#555" stroke-width="0.8"/><rect x="1" y="16" width="6" height="5" fill="#a8c8e8" stroke="#4a6a90" stroke-width="0.8"/><rect x="15" y="16" width="6" height="5" fill="#a8c8e8" stroke="#4a6a90" stroke-width="0.8"/></svg>
<!-- dock panel -->
<svg class="a" style="left:1248px;top:136px" width="17" height="16" viewBox="0 0 17 16"><defs><linearGradient id="fsg" x1="0" y1="0" x2="1" y2="0"><stop offset="0" stop-color="#000"/><stop offset="1" stop-color="#666"/></linearGradient></defs><path d="M0,0 H16 L14.5,2 H2.2 V13.5 L0,16z" fill="url(#fsg)"/><path d="M0.5,15.5 C3,12.5 5,10.5 7,9.5 L12.5,3.5 L15,5.5 L9.5,11.5 C8,13 5,14.5 0.5,15.5z" fill="#111"/><path d="M3,13.5 C5,12 7,11 9,10" stroke="#777" stroke-width="0.7" fill="none"/><path d="M12.5,3.5 L15.5,1.2 L16.5,2.5 L15,5.5z" fill="#f5a800"/></svg>
<div class="t" style="left:1265px;top:136px;font-size:15px;color:#3d3846;letter-spacing:-0.1px">Fond et contour (Maj+Ctrl+F)</div>
<svg class="a" style="left:1556px;top:137px" width="13" height="12" viewBox="0 0 13 12"><rect x="0.5" y="0.5" width="12" height="11" rx="2" fill="none" stroke="#999"/><path d="M4,6 L8.5,3 V9z" fill="#999"/></svg>
<svg class="a" style="left:1584px;top:137px" width="13" height="12" viewBox="0 0 13 12"><rect x="0.5" y="0.5" width="12" height="11" rx="2" fill="none" stroke="#999"/><path d="M3.5,3 L9.5,9 M9.5,3 L3.5,9" stroke="#888" stroke-width="1.6"/></svg>
<div class="a" style="left:1248px;top:158px;width:357px;height:419px;border:1px solid #c2c8d0;border-radius:1px"></div>
<div class="a" style="left:1252px;top:189px;width:349px;height:306px;background:#fff;border:1px solid #c2c8d0"></div>
<div class="a" style="left:1252px;top:162px;width:68px;height:29px;background:#fff;border:1px solid #c8cbd0;border-bottom:none;border-radius:4px 4px 0 0"></div>
<svg class="a" style="left:1260px;top:170px" width="13" height="13" viewBox="0 0 13 13"><defs><linearGradient id="fg" x1="0" y1="0" x2="1" y2="1"><stop offset="0" stop-color="#7fa0cc"/><stop offset="1" stop-color="#f4f7fb"/></linearGradient></defs><rect x="0" y="0" width="12" height="12" fill="url(#fg)"/></svg>
<div class="t" style="left:1277px;top:170px;font-size:15px;color:#3d3846">Fond</div>
<svg class="a" style="left:1324px;top:171px" width="12" height="12" viewBox="0 0 12 12"><rect x="0.5" y="0.5" width="11" height="11" fill="#fff" stroke="#666"/></svg>
<div class="t" style="left:1341px;top:170px;font-size:15px;color:#3d3846">Contour</div>
<svg class="a" style="left:1408px;top:171px" width="13" height="12" viewBox="0 0 13 12"><path d="M0,2.5 H10 M0,6.5 H11 M0,10.5 H12" stroke="#111" stroke-width="1.3"/><path d="M10,0 L12.5,2.5 L10,5" fill="none" stroke="#111" stroke-width="1.2"/></svg>
<div class="t" style="left:1426px;top:170px;font-size:15px;color:#3d3846">Style du contour</div>
<!-- fill buttons -->
<svg class="a" style="left:1274px;top:208px" width="10" height="10" viewBox="0 0 10 10"><path d="M1,1 L9,9 M9,1 L1,9" stroke="#222" stroke-width="1.6"/></svg>
<svg class="a" style="left:1303px;top:205px" width="240" height="16" viewBox="0 0 240 16">
<defs><pattern id="dith" width="2" height="2" patternUnits="userSpaceOnUse"><rect width="1" height="1" fill="#555"/><rect x="1" y="1" width="1" height="1" fill="#555"/></pattern></defs>
<rect x="0.5" y="0.5" width="15" height="15" fill="#98a2b0" stroke="#444" stroke-dasharray="1,1"/>
<rect x="32.5" y="0.5" width="15" height="15" fill="#b4bbc6" stroke="#444" stroke-dasharray="1,1"/>
<rect x="64.5" y="0.5" width="15" height="15" fill="#aeb6c2" stroke="#444" stroke-dasharray="1,1"/><rect x="67" y="3" width="10" height="10" fill="#dde1e7"/>
<rect x="96.5" y="0.5" width="15" height="15" fill="#d6dae0" stroke="#333" stroke-dasharray="1,1"/><rect x="97" y="1" width="7" height="7" fill="#a9b3c0"/><rect x="104" y="8" width="7" height="7" fill="#a9b3c0"/>
<rect x="128.5" y="0.5" width="15" height="15" fill="#cdd2d9" stroke="#333" stroke-dasharray="1,1"/><path d="M132,4 h3 v3 h-3z M137,4h3v3h-3z M132,9h3v3h-3z M137,9h3v3h-3z" fill="#eef0f3"/>
<rect x="160.5" y="0.5" width="15" height="15" fill="#bcc3cc" stroke="#333" stroke-dasharray="1,1"/><rect x="162" y="2" width="11" height="11" fill="#e2e5ea"/>
</svg>
<div class="t" style="left:1497px;top:204px;font-size:17px;font-weight:bold;color:#3a3a3a">?</div>
<div class="a" style="left:1535px;top:198px;width:26px;height:30px;background:#f4f5f7;border:1px solid #d8dbe0;border-radius:4px"></div>
<svg class="a" style="left:1541px;top:205px" width="14" height="14" viewBox="0 0 14 14"><path d="M3,1 C0,3 0,9 2,11 C4,13.5 10,13.5 12,11 C14,9 14,3 11,1 L9,3.5 C11,5 11,9 9.5,10 C8,11 6,11 4.5,10 C3,9 3,5 5,3.5z" fill="#3a3a3a"/></svg>
<svg class="a" style="left:1569px;top:205px" width="14" height="14" viewBox="0 0 14 14"><path d="M3,1 C0,3 0,9 2,11 C4,13.5 10,13.5 12,11 C14,9 14,3 11,1 L7,4z" fill="#3a3a3a"/></svg>
<div class="t" style="left:1263px;top:238px;font-size:15px;font-weight:bold;color:#3d3846">Aucun objet</div>
<!-- Flou -->
<div class="a" style="left:1253px;top:500px;width:331px;height:32px;background:#fafafa;border:1px solid #e2e4e8;border-right:none;border-radius:4px 0 0 4px"></div>
<div class="a" style="left:1583px;top:499px;width:18px;height:34px;background:#fff"></div>
<div class="t" style="left:1260px;top:509px;font-size:15px;color:#8a8a8a">Flou (%)</div>
<div class="t" style="left:1551px;top:509px;font-size:15px;color:#8a8a8a">0.0</div>
<svg class="a" style="left:1587px;top:503px" width="9" height="24" viewBox="0 0 9 24"><path d="M0.5,5 L4.5,1 L8.5,5z M0.5,18 L4.5,22 L8.5,18z" fill="#888"/></svg>
<!-- Opacite -->
<div class="a" style="left:1253px;top:538px;width:331px;height:32px;background:#fafafa;border:1px solid #e2e4e8;border-right:none;border-radius:4px 0 0 4px"></div>
<div class="a" style="left:1583px;top:537px;width:18px;height:34px;background:#fff"></div>
<div class="a" style="left:1256px;top:541px;width:323px;height:26px;background:#e95420"></div>
<div class="t" style="left:1260px;top:547px;font-size:15px;color:#fff">Opacité (%)</div>
<div class="t" style="left:1537px;top:547px;font-size:15px;color:#fff">100.0</div>
<svg class="a" style="left:1587px;top:541px" width="9" height="24" viewBox="0 0 9 24"><path d="M0.5,5 L4.5,1 L8.5,5z M0.5,18 L4.5,22 L8.5,18z" fill="#888"/></svg>
<!-- commands bar -->
<svg class="a" style="left:1618px;top:138px" width="17" height="17" viewBox="0 0 17 17"><path d="M1.5,0.5 h8 l4,4 v11 h-12z" fill="#f4f4f4" stroke="#aaa"/><path d="M9.5,0.5 v4 h4" fill="#fff" stroke="#bbb"/><path d="M10,7.5 h3 v3 h3 v3 h-3 v3 h-3 v-3 h-3 v-3 h3z" fill="#6cba3c" stroke="#3a7020" stroke-width="0.8"/></svg>
<svg class="a" style="left:1618px;top:166px" width="16" height="16" viewBox="0 0 16 16"><path d="M1.5,0.5 h8 l3,3 v6 h-11z" fill="#fafafa" stroke="#999" stroke-width="0.8"/><path d="M0.5,6.5 h3 v-2 h2 v2 h10 v9 h-15z" fill="#ececec" stroke="#aaa" stroke-width="0.6"/><defs><linearGradient id="opg" x1="0" y1="0" x2="0" y2="1"><stop offset="0" stop-color="#f89860"/><stop offset="1" stop-color="#d84010"/></linearGradient></defs><path d="M2,7 h13.5 v8.5 h-13.5z" fill="url(#opg)"/></svg>
<svg class="a" style="left:1618px;top:194px" width="16" height="17" viewBox="0 0 16 17"><rect x="0.5" y="1" width="15" height="15" rx="1.5" fill="#e6e6e6" stroke="#666"/><rect x="1" y="12" width="14" height="3.5" fill="#3a3a3a"/><path d="M1,11.5 h14" stroke="#fff"/><path d="M5,1 h6 v5 h3 l-6,5.5 l-6,-5.5 h3z" fill="#88c850" stroke="#4a8a20" stroke-width="0.8"/></svg>
<svg class="a" style="left:1618px;top:222px" width="16" height="16" viewBox="0 0 16 16"><rect x="3.5" y="0.5" width="9" height="6" fill="#fafafa" stroke="#888"/><rect x="0.5" y="5.5" width="15" height="8.5" rx="2" fill="#e4e4e4" stroke="#555"/><rect x="2" y="8" width="12" height="3" fill="#3a3a3a"/><rect x="3" y="12.5" width="10" height="3" fill="#fff" stroke="#777" stroke-width="0.8"/><path d="M8,1.5 v3 M6.5,3 l1.5,1.5 l1.5,-1.5" stroke="#666" fill="none" stroke-width="0.9"/></svg>
<div class="seph" style="left:1616px;top:249px;width:20px"></div>
<svg class="a" style="left:1618px;top:262px" width="16" height="16" viewBox="0 0 16 16"><path d="M2.5,0.5 h8 l3.5,3.5 v11.5 h-11.5z" fill="#f2f2f2" stroke="#bbb"/><path d="M0.5,7 h7 v-3 l5,4.5 l-5,4.5 v-3 h-7z" fill="#5a9ee0" stroke="#3a78b8" stroke-width="0.6"/></svg>
<svg class="a" style="left:1618px;top:290px" width="16" height="16" viewBox="0 0 16 16"><path d="M1.5,0.5 h8 l3.5,3.5 v11.5 h-11.5z" fill="#f2f2f2" stroke="#bbb"/><path d="M3,3 h5 M3,5 h4" stroke="#d0b0a0"/><path d="M4,7.5 h6 v-3 l5.5,4.5 l-5.5,4.5 v-3 h-6z" fill="#e070e0" stroke="#b040b0" stroke-width="0.6"/></svg>
<div class="seph" style="left:1616px;top:317px;width:20px"></div>
<svg class="a" style="left:1618px;top:330px" width="16" height="16" viewBox="0 0 16 16" opacity="0.9"><path d="M0.5,8 l6,-6 v3.5 c5,0 8,2 9,8.5 c-2,-3 -4,-4 -9,-4 v3.5z" fill="#b87868"/></svg>
<svg class="a" style="left:1618px;top:358px" width="16" height="16" viewBox="0 0 16 16" opacity="0.9"><path d="M15.5,8 l-6,-6 v3.5 c-5,0 -8,2 -9,8.5 c2,-3 4,-4 9,-4 v3.5z" fill="#98a070"/></svg>
<div class="seph" style="left:1616px;top:385px;width:20px"></div>
<svg class="a" style="left:1618px;top:398px" width="16" height="16" viewBox="0 0 16 16"><path d="M0.5,0.5 h8 l2,2 v9 h-10z" fill="#eee" stroke="#999"/><path d="M5.5,4.5 h8 l2,2 v9 h-10z" fill="#f4f4f4" stroke="#888"/><path d="M7,8 h7 M7,10 h7 M7,12 h7" stroke="#999"/></svg>
<svg class="a" style="left:1618px;top:426px" width="16" height="17" viewBox="0 0 16 17"><path d="M3,1 L9,10 M13,1 L7,10" stroke="#888" stroke-width="1.5"/><circle cx="4.5" cy="13" r="3" fill="none" stroke="#c03030" stroke-width="2"/><circle cx="11.5" cy="13" r="3" fill="none" stroke="#c03030" stroke-width="2"/></svg>
<svg class="a" style="left:1618px;top:454px" width="16" height="17" viewBox="0 0 16 17"><rect x="0.5" y="2.5" width="11" height="13" fill="#c8a070" stroke="#8a6a40"/><rect x="3.5" y="0.5" width="5" height="3" fill="#ddd" stroke="#666"/><path d="M5.5,5.5 h8 l2,2 v9 h-10z" fill="#f4f4f4" stroke="#888"/><path d="M7,9 h7 M7,11 h7 M7,13 h7" stroke="#999"/></svg>
<div class="seph" style="left:1616px;top:481px;width:20px"></div>
<svg class="a" style="left:1617px;top:494px" width="18" height="17" viewBox="0 0 18 17"><path d="M11,11 L16,16" stroke="#111" stroke-width="2.5"/><circle cx="7.5" cy="7.5" r="6.5" fill="#e8f0f8" stroke="#111" stroke-width="1.5"/><rect x="4" y="4.5" width="7" height="6" fill="none" stroke="#111" stroke-dasharray="1,1"/></svg>
<svg class="a" style="left:1617px;top:522px" width="18" height="17" viewBox="0 0 18 17"><path d="M11,11 L16,16" stroke="#111" stroke-width="2.5"/><circle cx="7.5" cy="7.5" r="6.5" fill="#e8f0f8" stroke="#111" stroke-width="1.5"/><rect x="4" y="4" width="5" height="5" fill="#f0d040" stroke="#333" stroke-width="0.8"/><rect x="6.5" y="6.5" width="5" height="5" fill="#f0d040" stroke="#333" stroke-width="0.8"/></svg>
<svg class="a" style="left:1617px;top:550px" width="18" height="17" viewBox="0 0 18 17"><path d="M11,11 L16,16" stroke="#111" stroke-width="2.5"/><circle cx="7.5" cy="7.5" r="6.5" fill="#e8f0f8" stroke="#111" stroke-width="1.5"/><rect x="5" y="3.5" width="5.5" height="8" fill="#fff" stroke="#111"/></svg>
<div class="seph" style="left:1616px;top:577px;width:20px"></div>
<svg class="a" style="left:1618px;top:590px" width="16" height="16" viewBox="0 0 16 16"><rect x="0.5" y="0.5" width="9" height="9" fill="#b8cce0" stroke="#222"/><rect x="3.5" y="3.5" width="12" height="12" fill="#d0dcea" stroke="#111" stroke-width="1.3"/></svg>
<svg class="a" style="left:1618px;top:618px" width="16" height="16" viewBox="0 0 16 16"><rect x="0.5" y="0.5" width="9" height="9" fill="#b8cce0" stroke="#222"/><rect x="3.5" y="3.5" width="12" height="12" fill="#d0dcea" stroke="#111" stroke-width="1.3"/><path d="M7,9 v-1.5 a2.5,2.5 0 0 1 5,0 v1.5" fill="none" stroke="#111"/><rect x="6" y="9" width="7" height="4.5" fill="#f0b020" stroke="#111"/></svg>
<svg class="a" style="left:1618px;top:646px" width="16" height="16" viewBox="0 0 16 16"><rect x="0.5" y="0.5" width="9" height="9" fill="#b8cce0" stroke="#222"/><rect x="3.5" y="3.5" width="12" height="12" fill="#d0dcea" stroke="#111" stroke-width="1.3"/><path d="M8,7 h3 v2" fill="none" stroke="#111"/><rect x="6" y="9" width="7" height="4.5" fill="#70b040" stroke="#111"/></svg>
<div class="seph" style="left:1616px;top:673px;width:20px"></div>
<svg class="a" style="left:1618px;top:686px" width="16" height="16" viewBox="0 0 16 16"><path d="M0.5,0.5 h2 M0.5,0.5 v2 M15.5,0.5 h-2 M15.5,0.5 v2 M0.5,15.5 h2 M0.5,15.5 v-2 M15.5,15.5 h-2 M15.5,15.5 v-2" stroke="#111" stroke-width="1.5"/><circle cx="10" cy="6" r="3.8" fill="#c8d8e8" stroke="#333" stroke-width="0.9"/><path d="M3,13 v-5 h6 v5z" fill="#b8cce0" stroke="#333" stroke-width="0.9"/></svg>
<svg class="a" style="left:1618px;top:714px" width="16" height="16" viewBox="0 0 16 16"><path d="M0.5,0.5 h2 M0.5,0.5 v2 M15.5,0.5 h-2 M15.5,0.5 v2 M0.5,15.5 h2 M0.5,15.5 v-2 M15.5,15.5 h-2 M15.5,15.5 v-2" stroke="#111" stroke-width="1.5"/><circle cx="10" cy="6" r="3.8" fill="#c8d8e8" stroke="#333" stroke-width="0.9"/><path d="M3,13 v-5 h6 v5z" fill="#f0c030" stroke="#333" stroke-width="0.9"/></svg>
<div class="seph" style="left:1616px;top:741px;width:20px"></div>
<svg class="a" style="left:1618px;top:754px" width="16" height="16" viewBox="0 0 16 16"><path d="M0.5,0.5 H15 L14,2 H2 V13 L0.5,15.5z" fill="#111"/><path d="M2,15 C3,11 6,8 12,3 L15,4 C11,9 7,13 2,15z" fill="#222"/><path d="M12,3 L15,1 L16,3.5 L15,4z" fill="#f5b000"/></svg>
<svg class="a" style="left:1618px;top:781px" width="16" height="17" viewBox="0 0 16 17"><path d="M0.5,0.5 H15.5 V5.5 H14 C13.5,3 12.5,2.5 10,2.5 V14 C10,15 11,15.3 12,15.3 V16.5 H4 V15.3 C5,15.3 6,15 6,14 V2.5 C3.5,2.5 2.5,3 2,5.5 H0.5z" fill="#111"/></svg>
<svg class="a" style="left:1618px;top:810px" width="16" height="16" viewBox="0 0 16 16" fill="#fff" stroke="#222" stroke-width="1"><path d="M0.5,10 L4,7.5 H15.5 L12,10z"/><path d="M0.5,7 L4,4.5 H15.5 L12,7z"/><path d="M0.5,4 L4,1.5 H15.5 L12,4z"/></svg>
<svg class="a" style="left:1618px;top:838px" width="16" height="16" viewBox="0 0 16 16"><rect x="0.5" y="0.5" width="15" height="15" fill="#fafafa" stroke="#111"/><rect x="1" y="1" width="14" height="2.5" fill="#9ab8d8"/><path d="M6,6.5 L3.5,9 L6,11.5 M10,6.5 L12.5,9 L10,11.5" fill="none" stroke="#333"/></svg>
<svg class="a" style="left:1623px;top:871px" width="6" height="10" viewBox="0 0 6 10"><path d="M0.5,0.5 L5.5,5 L0.5,9.5z" fill="#666"/></svg>
<!-- snap bar -->
<div class="btn" style="left:1649px;top:133px;width:26px;height:26px"></div>
<div class="btn" style="left:1649px;top:325px;width:26px;height:26px"></div>
<div class="btn" style="left:1649px;top:409px;width:26px;height:26px"></div>
<div class="btn" style="left:1649px;top:505px;width:26px;height:26px"></div>
<div class="btn" style="left:1649px;top:657px;width:26px;height:26px"></div>
<div class="btn" style="left:1649px;top:685px;width:26px;height:26px"></div>
<div class="seph" style="left:1652px;top:166px;width:20px"></div>
<div class="seph" style="left:1652px;top:317px;width:20px"></div>
<div class="seph" style="left:1652px;top:497px;width:20px"></div>
<div class="seph" style="left:1652px;top:621px;width:20px"></div>
<svg class="a" style="left:1654px;top:138px" width="16" height="16" viewBox="0 0 16 16"><path d="M3,0 L6,3 L3,6 L0,3z" fill="#9aa8ff" stroke="#1a1aff" stroke-width="1.2"/><path d="M4.5,4.5 L10,10" stroke="#000" stroke-width="1.3"/><path d="M11.5,11.5 L7,10.5 L10.5,7z" fill="#000"/><path d="M13,10 L16,13 L13,16 L10,13z" fill="#a8c4e0" stroke="#1e8a1e" stroke-width="1.2"/></svg>
<svg class="a" style="left:1654px;top:178px" width="16" height="16" viewBox="0 0 16 16"><path d="M3,0 L6,3 L3,6 L0,3z" fill="#9aa8ff" stroke="#1a1aff" stroke-width="1.2"/><path d="M4.5,4.5 L10,10" stroke="#000" stroke-width="1.3"/><path d="M11.5,11.5 L7,10.5 L10.5,7z" fill="#000"/><path d="M13,10 L16,13 L13,16 L10,13z" fill="#a8c4e0" stroke="#1e8a1e" stroke-width="1.2"/></svg>
<svg class="a" style="left:1654px;top:206px" width="16" height="16" viewBox="0 0 16 16"><path d="M0.5,12.8 H12.8 V0" fill="none" stroke="#4a7a4a" stroke-width="1.5" stroke-dasharray="1.6,1.4"/></svg>
<svg class="a" style="left:1654px;top:234px" width="16" height="16" viewBox="0 0 16 16"><path d="M0.5,12.5 H11 M12.8,10 V0" fill="none" stroke="#555" stroke-width="1.5" stroke-dasharray="1.6,1.4"/><path d="M12.8,9.5 L15.5,12.5 L12.8,15.5 L10,12.5z" fill="#a8b8d8" stroke="#3a8a3a" stroke-width="1.1"/></svg>
<svg class="a" style="left:1654px;top:262px" width="16" height="16" viewBox="0 0 16 16"><path d="M0.5,12.5 H13" fill="none" stroke="#555" stroke-width="1.5" stroke-dasharray="1.6,1.4"/><path d="M12.8,12 V5" stroke="#111" stroke-width="1.2" stroke-dasharray="1.2,1"/><path d="M12.8,1 L15.3,3.8 L12.8,6.6 L10.3,3.8z" fill="#8898c8" stroke="#3a8a3a" stroke-width="1.1"/></svg>
<svg class="a" style="left:1654px;top:290px" width="16" height="16" viewBox="0 0 16 16"><path d="M0.5,12.8 H12.8 V0" fill="none" stroke="#555" stroke-width="1.5" stroke-dasharray="1.6,1.4"/><circle cx="3.6" cy="3.6" r="1.8" fill="#b8c8e0" stroke="#3a8a3a" stroke-width="1.2"/></svg>
<svg class="a" style="left:1654px;top:330px" width="16" height="16" viewBox="0 0 16 16"><path d="M3,0 L6,3 L3,6 L0,3z" fill="#9aa8ff" stroke="#1a1aff" stroke-width="1.2"/><path d="M4.5,4.5 L10,10" stroke="#000" stroke-width="1.3"/><path d="M11.5,11.5 L7,10.5 L10.5,7z" fill="#000"/><path d="M13,10 L16,13 L13,16 L10,13z" fill="#a8c4e0" stroke="#1e8a1e" stroke-width="1.2"/></svg>
<svg class="a" style="left:1654px;top:358px" width="16" height="16" viewBox="0 0 16 16"><path d="M1,1.5 C8,2 14,6 13,12 M13,12 L9,9 M13,12 L15,8" fill="none" stroke="#209020" stroke-width="1.5"/></svg>
<svg class="a" style="left:1654px;top:386px" width="16" height="16" viewBox="0 0 16 16"><path d="M1,15 L15,1 M1,11 L15,5" stroke="#333" stroke-width="1"/><circle cx="8" cy="8" r="2" fill="#3a8ac0" stroke="#208020" stroke-width="1.2"/></svg>
<svg class="a" style="left:1654px;top:414px" width="16" height="16" viewBox="0 0 16 16"><path d="M1,1 C7,1 11,5 10,11" fill="none" stroke="#444" stroke-width="1"/><path d="M10,14 C13,12 15,10 14,6" fill="none" stroke="#444" stroke-width="1"/><rect x="7.5" y="10.5" width="4" height="4" transform="rotate(45 9.5 12.5)" fill="#3a8ac0" stroke="#209020" stroke-width="1.2"/></svg>
<svg class="a" style="left:1654px;top:442px" width="16" height="16" viewBox="0 0 16 16"><path d="M1,1 C4,1 8,3 7,5" fill="none" stroke="#444"/><path d="M7,5 C6,9 3,13 9,14 L15,13" fill="none" stroke="#444"/><rect x="5" y="2.5" width="4" height="4" fill="#3a8ac0" stroke="#209020" stroke-width="1.2"/></svg>
<svg class="a" style="left:1654px;top:470px" width="16" height="16" viewBox="0 0 16 16"><path d="M1,15 L15,1" stroke="#333"/><path d="M2,10 L5,14 M4,9 L7,13 M10,2 L13,6 M12,1 L15,5" stroke="#d02020" stroke-width="1.3"/><circle cx="8" cy="8" r="1.8" fill="#3a8ac0" stroke="#208020"/></svg>
<svg class="a" style="left:1654px;top:510px" width="16" height="16" viewBox="0 0 16 16"><path d="M3,0 L6,3 L3,6 L0,3z" fill="#9aa8ff" stroke="#1a1aff" stroke-width="1.2"/><path d="M4.5,4.5 L10,10" stroke="#000" stroke-width="1.3"/><path d="M11.5,11.5 L7,10.5 L10.5,7z" fill="#000"/><path d="M13,10 L16,13 L13,16 L10,13z" fill="#a8c4e0" stroke="#1e8a1e" stroke-width="1.2"/></svg>
<svg class="a" style="left:1654px;top:538px" width="16" height="16" viewBox="0 0 16 16"><path d="M1,14.5 H13.5 V2" fill="none" stroke="#555" stroke-width="1"/><circle cx="6" cy="6" r="1.8" fill="#fff" stroke="#3a8a3a" stroke-width="1.2"/></svg>
<svg class="a" style="left:1654px;top:566px" width="16" height="16" viewBox="0 0 16 16"><path d="M1,14.5 H13.5 V1" fill="none" stroke="#111" stroke-width="1.2" stroke-dasharray="1.5,1"/><path d="M6,2 v8 M2,6 h8" stroke="#111" stroke-width="1.1"/></svg>
<svg class="a" style="left:1654px;top:590px" width="18" height="18" viewBox="0 0 18 18"><path d="M2,16 L8,1 H10 L16,16 H12.5 L11,12 H7 L5.5,16z M7.8,9.5 H10.2 L9,6z" fill="#111"/><path d="M2,16 H16" stroke="#3a9a3a" stroke-width="1.2"/><rect x="0.5" y="14.5" width="3" height="3" transform="rotate(45 2 16)" fill="#fff" stroke="#3a9a3a"/></svg>
<svg class="a" style="left:1656px;top:634px" width="12" height="16" viewBox="0 0 12 16"><defs><linearGradient id="pgr" x1="0" y1="0" x2="1" y2="1"><stop offset="0" stop-color="#fff"/><stop offset="1" stop-color="#bbb"/></linearGradient></defs><rect x="0.5" y="0.5" width="10" height="14" fill="url(#pgr)" stroke="#111" stroke-width="1.1"/><path d="M11,2 V15.5 H2" stroke="#444" stroke-width="1.2" fill="none"/></svg>
<svg class="a" style="left:1654px;top:662px" width="16" height="16" viewBox="0 0 16 16"><path d="M4,1 V15 M8,1 V15 M12,1 V15 M1,4 H15 M1,8 H15 M1,12 H15" stroke="#0000f0" stroke-width="1.3"/></svg>
<svg class="a" style="left:1654px;top:690px" width="16" height="16" viewBox="0 0 16 16"><path d="M2,1 V15 M14,1 V15 M10,1 L6,15" stroke="#0000f0" stroke-width="1.4"/></svg>
<!-- status bar -->
<div class="t" style="left:74px;top:916px;font-size:12px;color:#3d3846">Fond :</div>
<div class="t" style="left:74px;top:931px;font-size:12px;color:#3d3846">Contour :</div>
<div class="t" style="left:149px;top:916px;font-size:12px;color:#3d3846">N/A</div>
<div class="t" style="left:149px;top:931px;font-size:12px;color:#3d3846">N/A</div>
<div class="t" style="left:195px;top:923px;font-size:13px;color:#3d3846">O :</div>
<div class="inp" style="left:213px;top:917px;width:46px;height:27px"></div>
<div class="t" style="left:222px;top:923px;font-size:13px;color:#a0a0a0">0</div>
<div class="a" style="left:244px;top:918px;width:1px;height:25px;background:#dcdde0"></div>
<div class="a" style="left:245px;top:930px;width:13px;height:1px;background:#e6e7ea"></div>
<svg class="a" style="left:247px;top:921px" width="9" height="20" viewBox="0 0 9 20"><path d="M0.5,5 L4.5,1 L8.5,5z M0.5,15 L4.5,19 L8.5,15z" fill="#7b7b7b"/></svg>
<div class="sepv" style="left:262px;top:917px;height:27px"></div>
<svg class="a" style="left:271px;top:923px" width="14" height="12" viewBox="0 0 14 12"><path d="M1,6.5 C4,2 10,2 13,6.5 C10,11 4,11 1,6.5z" fill="#fff" stroke="#111" stroke-width="1.3"/><circle cx="7" cy="6.5" r="2.5" fill="#111"/><path d="M2,3 L3.5,4.5 M7,1 V3 M12,3 L10.5,4.5" stroke="#111"/></svg>
<svg class="a" style="left:301px;top:924px" width="10" height="12" viewBox="0 0 11 13"><path d="M2.5,6 v-2.5 a2.5,2.5 0 0 1 5,0" fill="none" stroke="#222" stroke-width="1.2"/><rect x="1" y="6" width="8.5" height="6.3" fill="#f5dc6a" stroke="#222" stroke-width="1.1"/><rect x="4.5" y="8" width="1.6" height="2.5" fill="#222"/></svg>
<div class="a" style="left:321px;top:916px;width:101px;height:28px;background:#fff;border:1px solid #cdd0d4;border-radius:4px"></div>
<div class="t" style="left:331px;top:923px;font-size:12.2px;font-weight:bold;color:#3d3846">•Calque 1</div>
<svg class="a" style="left:402px;top:927px" width="10" height="6" viewBox="0 0 10 6"><path d="M0,0 H10 L5,6 Z" fill="#555"/></svg>
<div class="t" style="left:424px;top:922px;font-size:15px;color:#3d3846">Aucun objet sélectionné. Sélectionnez des objets par Clic, Maj+Clic ou Alt+molette, ou cliquez-déplacez autour des objets à sélectionner.</div>
<div class="sepv" style="left:1533px;top:916px;height:29px"></div>
<div class="t" style="left:1535px;top:917px;font-size:12px;color:#3d3846;font-family:'Liberation Mono',monospace">X:</div>
<div class="t" style="left:1535px;top:932px;font-size:12px;color:#3d3846;font-family:'Liberation Mono',monospace">Y:</div>
<div class="t" style="left:1571px;top:917px;font-size:12px;color:#3d3846;font-family:'Liberation Mono',monospace">0.00</div>
<div class="t" style="left:1571px;top:932px;font-size:12px;color:#3d3846;font-family:'Liberation Mono',monospace">0.00</div>
<div class="t" style="left:1607px;top:924px;font-size:12px;color:#3d3846;font-family:'Liberation Mono',monospace">Z:</div>
<div class="inp" style="left:1625px;top:917px;width:60px;height:30px;background:#fff"></div>
<div class="t" style="left:1640px;top:924px;font-size:12px;color:#6a6a6a;font-family:'Liberation Mono',monospace">35%</div>
<div class="a" style="left:1664px;top:918px;width:1px;height:27px;background:#dcdde0"></div>
<svg class="a" style="left:1667px;top:921px" width="9" height="20" viewBox="0 0 9 20"><path d="M0.5,5 L4.5,1 L8.5,5z M0.5,15 L4.5,19 L8.5,15z" fill="#555"/></svg>
<svg class="a" style="left:72px;top:904px" width="1608" height="10" viewBox="0 0 1608 10"><rect x="1" y="0" width="15" height="10" fill="#fff"/><path d="M1,0 L16,10 M16,0 L1,10" stroke="#8b1a1a" stroke-width="1.2"/><rect x="16" y="0" width="15" height="10" fill="#000"/><rect x="31" y="0" width="15" height="10" fill="#808080"/><rect x="46" y="0" width="15" height="10" fill="#fff"/><rect x="61" y="0" width="15" height="10" fill="rgb(253, 248, 129)"/><rect x="76" y="0" width="15" height="10" fill="rgb(252, 246, 127)"/><rect x="91" y="0" width="15" height="10" fill="rgb(251, 244, 125)"/><rect x="106" y="0" width="15" height="10" fill="rgb(250, 242, 124)"/><rect x="121" y="0" width="15" height="10" fill="rgb(249, 240, 122)"/><rect x="136" y="0" width="15" height="10" fill="rgb(248, 239, 120)"/><rect x="151" y="0" width="15" height="10" fill="rgb(247, 237, 118)"/><rect x="166" y="0" width="15" height="10" fill="rgb(246, 235, 116)"/><rect x="181" y="0" width="15" height="10" fill="rgb(245, 233, 115)"/><rect x="196" y="0" width="15" height="10" fill="rgb(244, 231, 113)"/><rect x="211" y="0" width="15" height="10" fill="rgb(243, 229, 111)"/><rect x="226" y="0" width="15" height="10" fill="rgb(243, 227, 109)"/><rect x="241" y="0" width="15" height="10" fill="rgb(242, 225, 107)"/><rect x="256" y="0" width="15" height="10" fill="rgb(241, 223, 105)"/><rect x="271" y="0" width="15" height="10" fill="rgb(239, 221, 101)"/><rect x="286" y="0" width="15" height="10" fill="rgb(238, 218, 98)"/><rect x="301" y="0" width="15" height="10" fill="rgb(237, 216, 94)"/><rect x="316" y="0" width="15" height="10" fill="rgb(235, 214, 91)"/><rect x="331" y="0" width="15" height="10" fill="rgb(234, 211, 87)"/><rect x="346" y="0" width="15" height="10" fill="rgb(232, 209, 84)"/><rect x="361" y="0" width="15" height="10" fill="rgb(231, 207, 81)"/><rect x="376" y="0" width="15" height="10" fill="rgb(230, 204, 77)"/><rect x="391" y="0" width="15" height="10" fill="rgb(228, 202, 74)"/><rect x="406" y="0" width="15" height="10" fill="rgb(227, 200, 70)"/><rect x="421" y="0" width="15" height="10" fill="rgb(226, 197, 67)"/><rect x="436" y="0" width="15" height="10" fill="rgb(224, 195, 63)"/><rect x="451" y="0" width="15" height="10" fill="rgb(224, 193, 60)"/><rect x="466" y="0" width="15" height="10" fill="rgb(223, 191, 58)"/><rect x="481" y="0" width="15" height="10" fill="rgb(222, 189, 56)"/><rect x="496" y="0" width="15" height="10" fill="rgb(221, 187, 54)"/><rect x="511" y="0" width="15" height="10" fill="rgb(220, 185, 52)"/><rect x="526" y="0" width="15" height="10" fill="rgb(220, 183, 49)"/><rect x="541" y="0" width="15" height="10" fill="rgb(219, 181, 47)"/><rect x="556" y="0" width="15" height="10" fill="rgb(218, 179, 45)"/><rect x="571" y="0" width="15" height="10" fill="rgb(218, 177, 42)"/><rect x="586" y="0" width="15" height="10" fill="rgb(217, 175, 40)"/><rect x="601" y="0" width="15" height="10" fill="rgb(216, 173, 38)"/><rect x="616" y="0" width="15" height="10" fill="rgb(215, 171, 36)"/><rect x="631" y="0" width="15" height="10" fill="rgb(214, 169, 34)"/><rect x="646" y="0" width="15" height="10" fill="rgb(214, 167, 31)"/><rect x="661" y="0" width="15" height="10" fill="rgb(212, 165, 30)"/><rect x="676" y="0" width="15" height="10" fill="rgb(211, 163, 28)"/><rect x="691" y="0" width="15" height="10" fill="rgb(210, 160, 26)"/><rect x="706" y="0" width="15" height="10" fill="rgb(208, 158, 24)"/><rect x="721" y="0" width="15" height="10" fill="rgb(207, 156, 22)"/><rect x="736" y="0" width="15" height="10" fill="rgb(205, 154, 21)"/><rect x="751" y="0" width="15" height="10" fill="rgb(204, 152, 19)"/><rect x="766" y="0" width="15" height="10" fill="rgb(203, 149, 17)"/><rect x="781" y="0" width="15" height="10" fill="rgb(201, 147, 15)"/><rect x="796" y="0" width="15" height="10" fill="rgb(200, 145, 13)"/><rect x="811" y="0" width="15" height="10" fill="rgb(199, 142, 12)"/><rect x="826" y="0" width="15" height="10" fill="rgb(197, 140, 10)"/><rect x="841" y="0" width="15" height="10" fill="rgb(196, 138, 8)"/><rect x="856" y="0" width="15" height="10" fill="rgb(192, 134, 7)"/><rect x="871" y="0" width="15" height="10" fill="rgb(188, 130, 7)"/><rect x="886" y="0" width="15" height="10" fill="rgb(183, 125, 6)"/><rect x="901" y="0" width="15" height="10" fill="rgb(179, 121, 6)"/><rect x="916" y="0" width="15" height="10" fill="rgb(175, 117, 5)"/><rect x="931" y="0" width="15" height="10" fill="rgb(171, 113, 4)"/><rect x="946" y="0" width="15" height="10" fill="rgb(167, 109, 4)"/><rect x="961" y="0" width="15" height="10" fill="rgb(162, 104, 3)"/><rect x="976" y="0" width="15" height="10" fill="rgb(158, 100, 3)"/><rect x="991" y="0" width="15" height="10" fill="rgb(154, 96, 2)"/><rect x="1006" y="0" width="15" height="10" fill="rgb(150, 92, 1)"/><rect x="1021" y="0" width="15" height="10" fill="rgb(146, 88, 1)"/><rect x="1036" y="0" width="15" height="10" fill="rgb(141, 83, 0)"/><rect x="1051" y="0" width="15" height="10" fill="rgb(138, 80, 0)"/><rect x="1066" y="0" width="15" height="10" fill="rgb(134, 76, 0)"/><rect x="1081" y="0" width="15" height="10" fill="rgb(130, 72, 0)"/><rect x="1096" y="0" width="15" height="10" fill="rgb(126, 68, 0)"/><rect x="1111" y="0" width="15" height="10" fill="rgb(122, 64, 0)"/><rect x="1126" y="0" width="15" height="10" fill="rgb(119, 61, 0)"/><rect x="1141" y="0" width="15" height="10" fill="rgb(115, 57, 0)"/><rect x="1156" y="0" width="15" height="10" fill="rgb(111, 53, 0)"/><rect x="1171" y="0" width="15" height="10" fill="rgb(108, 50, 0)"/><rect x="1186" y="0" width="15" height="10" fill="rgb(104, 46, 0)"/><rect x="1201" y="0" width="15" height="10" fill="rgb(100, 42, 0)"/><rect x="1216" y="0" width="15" height="10" fill="rgb(96, 38, 0)"/><rect x="1231" y="0" width="15" height="10" fill="rgb(92, 34, 0)"/><rect x="1246" y="0" width="15" height="10" fill="rgb(89, 31, 0)"/><rect x="1261" y="0" width="15" height="10" fill="rgb(85, 27, 0)"/><rect x="1276" y="0" width="15" height="10" fill="rgb(81, 24, 0)"/><rect x="1291" y="0" width="15" height="10" fill="rgb(78, 20, 0)"/><rect x="1306" y="0" width="15" height="10" fill="rgb(74, 17, 0)"/><rect x="1321" y="0" width="15" height="10" fill="rgb(70, 14, 0)"/><rect x="1336" y="0" width="15" height="10" fill="rgb(67, 10, 0)"/><rect x="1351" y="0" width="15" height="10" fill="rgb(63, 7, 0)"/><rect x="1366" y="0" width="15" height="10" fill="rgb(59, 3, 0)"/><rect x="1381" y="0" width="15" height="10" fill="rgb(54, 2, 0)"/><rect x="1396" y="0" width="15" height="10" fill="rgb(49, 2, 0)"/><rect x="1411" y="0" width="15" height="10" fill="rgb(44, 1, 0)"/><rect x="1426" y="0" width="15" height="10" fill="rgb(38, 1, 0)"/><rect x="1441" y="0" width="15" height="10" fill="rgb(33, 1, 0)"/><rect x="1456" y="0" width="15" height="10" fill="rgb(27, 0, 0)"/><rect x="1471" y="0" width="15" height="10" fill="rgb(22, 0, 0)"/><rect x="1486" y="0" width="15" height="10" fill="rgb(19, 0, 0)"/><rect x="1501" y="0" width="15" height="10" fill="rgb(16, 0, 0)"/><rect x="1516" y="0" width="15" height="10" fill="rgb(14, 0, 0)"/><rect x="1531" y="0" width="15" height="10" fill="rgb(11, 0, 0)"/><rect x="1546" y="0" width="15" height="10" fill="rgb(8, 0, 0)"/><rect x="1561" y="0" width="15" height="10" fill="rgb(5, 0, 0)"/><rect x="1576" y="0" width="15" height="10" fill="rgb(2, 0, 0)"/><rect x="1591" y="0" width="4" height="10" fill="rgb(0, 0, 0)"/><path d="M1598,5 L1605,0.5 V9.5z" fill="#777"/></svg>
<svg class="a" style="left:128px;top:126px" width="1088" height="20" viewBox="0 0 1088 20"><g stroke="#3a3a3a" stroke-width="1" shape-rendering="crispEdges"><line x1="7.5" y1="15" x2="7.5" y2="19.5"/><line x1="14.5" y1="12" x2="14.5" y2="19.5"/><line x1="20.5" y1="15" x2="20.5" y2="19.5"/><line x1="27.5" y1="12" x2="27.5" y2="19.5"/><line x1="33.5" y1="15" x2="33.5" y2="19.5"/><line x1="40.5" y1="12" x2="40.5" y2="19.5"/><line x1="47.5" y1="15" x2="47.5" y2="19.5"/><line x1="53.5" y1="4" x2="53.5" y2="19.5"/><line x1="60.5" y1="15" x2="60.5" y2="19.5"/><line x1="67.5" y1="12" x2="67.5" y2="19.5"/><line x1="73.5" y1="15" x2="73.5" y2="19.5"/><line x1="80.5" y1="12" x2="80.5" y2="19.5"/><line x1="86.5" y1="15" x2="86.5" y2="19.5"/><line x1="93.5" y1="12" x2="93.5" y2="19.5"/><line x1="100.5" y1="15" x2="100.5" y2="19.5"/><line x1="106.5" y1="12" x2="106.5" y2="19.5"/><line x1="113.5" y1="15" x2="113.5" y2="19.5"/><line x1="119.5" y1="4" x2="119.5" y2="19.5"/><line x1="126.5" y1="15" x2="126.5" y2="19.5"/><line x1="133.5" y1="12" x2="133.5" y2="19.5"/><line x1="139.5" y1="15" x2="139.5" y2="19.5"/><line x1="146.5" y1="12" x2="146.5" y2="19.5"/><line x1="153.5" y1="15" x2="153.5" y2="19.5"/><line x1="159.5" y1="12" x2="159.5" y2="19.5"/><line x1="166.5" y1="15" x2="166.5" y2="19.5"/><line x1="172.5" y1="12" x2="172.5" y2="19.5"/><line x1="179.5" y1="15" x2="179.5" y2="19.5"/><line x1="186.5" y1="4" x2="186.5" y2="19.5"/><line x1="192.5" y1="15" x2="192.5" y2="19.5"/><line x1="199.5" y1="12" x2="199.5" y2="19.5"/><line x1="205.5" y1="15" x2="205.5" y2="19.5"/><line x1="212.5" y1="12" x2="212.5" y2="19.5"/><line x1="219.5" y1="15" x2="219.5" y2="19.5"/><line x1="225.5" y1="12" x2="225.5" y2="19.5"/><line x1="232.5" y1="15" x2="232.5" y2="19.5"/><line x1="239.5" y1="12" x2="239.5" y2="19.5"/><line x1="245.5" y1="15" x2="245.5" y2="19.5"/><line x1="252.5" y1="4" x2="252.5" y2="19.5"/><line x1="258.5" y1="15" x2="258.5" y2="19.5"/><line x1="265.5" y1="12" x2="265.5" y2="19.5"/><line x1="272.5" y1="15" x2="272.5" y2="19.5"/><line x1="278.5" y1="12" x2="278.5" y2="19.5"/><line x1="285.5" y1="15" x2="285.5" y2="19.5"/><line x1="291.5" y1="12" x2="291.5" y2="19.5"/><line x1="298.5" y1="15" x2="298.5" y2="19.5"/><line x1="305.5" y1="12" x2="305.5" y2="19.5"/><line x1="311.5" y1="15" x2="311.5" y2="19.5"/><line x1="318.5" y1="4" x2="318.5" y2="19.5"/><line x1="325.5" y1="15" x2="325.5" y2="19.5"/><line x1="331.5" y1="12" x2="331.5" y2="19.5"/><line x1="338.5" y1="15" x2="338.5" y2="19.5"/><line x1="344.5" y1="12" x2="344.5" y2="19.5"/><line x1="351.5" y1="15" x2="351.5" y2="19.5"/><line x1="358.5" y1="12" x2="358.5" y2="19.5"/><line x1="364.5" y1="15" x2="364.5" y2="19.5"/><line x1="371.5" y1="12" x2="371.5" y2="19.5"/><line x1="377.5" y1="15" x2="377.5" y2="19.5"/><line x1="384.5" y1="4" x2="384.5" y2="19.5"/><line x1="391.5" y1="15" x2="391.5" y2="19.5"/><line x1="397.5" y1="12" x2="397.5" y2="19.5"/><line x1="404.5" y1="15" x2="404.5" y2="19.5"/><line x1="411.5" y1="12" x2="411.5" y2="19.5"/><line x1="417.5" y1="15" x2="417.5" y2="19.5"/><line x1="424.5" y1="12" x2="424.5" y2="19.5"/><line x1="430.5" y1="15" x2="430.5" y2="19.5"/><line x1="437.5" y1="12" x2="437.5" y2="19.5"/><line x1="444.5" y1="15" x2="444.5" y2="19.5"/><line x1="450.5" y1="4" x2="450.5" y2="19.5"/><line x1="457.5" y1="15" x2="457.5" y2="19.5"/><line x1="463.5" y1="12" x2="463.5" y2="19.5"/><line x1="470.5" y1="15" x2="470.5" y2="19.5"/><line x1="477.5" y1="12" x2="477.5" y2="19.5"/><line x1="483.5" y1="15" x2="483.5" y2="19.5"/><line x1="490.5" y1="12" x2="490.5" y2="19.5"/><line x1="497.5" y1="15" x2="497.5" y2="19.5"/><line x1="503.5" y1="12" x2="503.5" y2="19.5"/><line x1="510.5" y1="15" x2="510.5" y2="19.5"/><line x1="516.5" y1="4" x2="516.5" y2="19.5"/><line x1="523.5" y1="15" x2="523.5" y2="19.5"/><line x1="530.5" y1="12" x2="530.5" y2="19.5"/><line x1="536.5" y1="15" x2="536.5" y2="19.5"/><line x1="543.5" y1="12" x2="543.5" y2="19.5"/><line x1="549.5" y1="15" x2="549.5" y2="19.5"/><line x1="556.5" y1="12" x2="556.5" y2="19.5"/><line x1="563.5" y1="15" x2="563.5" y2="19.5"/><line x1="569.5" y1="12" x2="569.5" y2="19.5"/><line x1="576.5" y1="15" x2="576.5" y2="19.5"/><line x1="583.5" y1="4" x2="583.5" y2="19.5"/><line x1="589.5" y1="15" x2="589.5" y2="19.5"/><line x1="596.5" y1="12" x2="596.5" y2="19.5"/><line x1="602.5" y1="15" x2="602.5" y2="19.5"/><line x1="609.5" y1="12" x2="609.5" y2="19.5"/><line x1="616.5" y1="15" x2="616.5" y2="19.5"/><line x1="622.5" y1="12" x2="622.5" y2="19.5"/><line x1="629.5" y1="15" x2="629.5" y2="19.5"/><line x1="635.5" y1="12" x2="635.5" y2="19.5"/><line x1="642.5" y1="15" x2="642.5" y2="19.5"/><line x1="649.5" y1="4" x2="649.5" y2="19.5"/><line x1="655.5" y1="15" x2="655.5" y2="19.5"/><line x1="662.5" y1="12" x2="662.5" y2="19.5"/><line x1="668.5" y1="15" x2="668.5" y2="19.5"/><line x1="675.5" y1="12" x2="675.5" y2="19.5"/><line x1="682.5" y1="15" x2="682.5" y2="19.5"/><line x1="688.5" y1="12" x2="688.5" y2="19.5"/><line x1="695.5" y1="15" x2="695.5" y2="19.5"/><line x1="702.5" y1="12" x2="702.5" y2="19.5"/><line x1="708.5" y1="15" x2="708.5" y2="19.5"/><line x1="715.5" y1="4" x2="715.5" y2="19.5"/><line x1="721.5" y1="15" x2="721.5" y2="19.5"/><line x1="728.5" y1="12" x2="728.5" y2="19.5"/><line x1="735.5" y1="15" x2="735.5" y2="19.5"/><line x1="741.5" y1="12" x2="741.5" y2="19.5"/><line x1="748.5" y1="15" x2="748.5" y2="19.5"/><line x1="754.5" y1="12" x2="754.5" y2="19.5"/><line x1="761.5" y1="15" x2="761.5" y2="19.5"/><line x1="768.5" y1="12" x2="768.5" y2="19.5"/><line x1="774.5" y1="15" x2="774.5" y2="19.5"/><line x1="781.5" y1="4" x2="781.5" y2="19.5"/><line x1="788.5" y1="15" x2="788.5" y2="19.5"/><line x1="794.5" y1="12" x2="794.5" y2="19.5"/><line x1="801.5" y1="15" x2="801.5" y2="19.5"/><line x1="807.5" y1="12" x2="807.5" y2="19.5"/><line x1="814.5" y1="15" x2="814.5" y2="19.5"/><line x1="821.5" y1="12" x2="821.5" y2="19.5"/><line x1="827.5" y1="15" x2="827.5" y2="19.5"/><line x1="834.5" y1="12" x2="834.5" y2="19.5"/><line x1="840.5" y1="15" x2="840.5" y2="19.5"/><line x1="847.5" y1="4" x2="847.5" y2="19.5"/><line x1="854.5" y1="15" x2="854.5" y2="19.5"/><line x1="860.5" y1="12" x2="860.5" y2="19.5"/><line x1="867.5" y1="15" x2="867.5" y2="19.5"/><line x1="874.5" y1="12" x2="874.5" y2="19.5"/><line x1="880.5" y1="15" x2="880.5" y2="19.5"/><line x1="887.5" y1="12" x2="887.5" y2="19.5"/><line x1="893.5" y1="15" x2="893.5" y2="19.5"/><line x1="900.5" y1="12" x2="900.5" y2="19.5"/><line x1="907.5" y1="15" x2="907.5" y2="19.5"/><line x1="913.5" y1="4" x2="913.5" y2="19.5"/><line x1="920.5" y1="15" x2="920.5" y2="19.5"/><line x1="926.5" y1="12" x2="926.5" y2="19.5"/><line x1="933.5" y1="15" x2="933.5" y2="19.5"/><line x1="940.5" y1="12" x2="940.5" y2="19.5"/><line x1="946.5" y1="15" x2="946.5" y2="19.5"/><line x1="953.5" y1="12" x2="953.5" y2="19.5"/><line x1="960.5" y1="15" x2="960.5" y2="19.5"/><line x1="966.5" y1="12" x2="966.5" y2="19.5"/><line x1="973.5" y1="15" x2="973.5" y2="19.5"/><line x1="979.5" y1="4" x2="979.5" y2="19.5"/><line x1="986.5" y1="15" x2="986.5" y2="19.5"/><line x1="993.5" y1="12" x2="993.5" y2="19.5"/><line x1="999.5" y1="15" x2="999.5" y2="19.5"/><line x1="1006.5" y1="12" x2="1006.5" y2="19.5"/><line x1="1012.5" y1="15" x2="1012.5" y2="19.5"/><line x1="1019.5" y1="12" x2="1019.5" y2="19.5"/><line x1="1026.5" y1="15" x2="1026.5" y2="19.5"/><line x1="1032.5" y1="12" x2="1032.5" y2="19.5"/><line x1="1039.5" y1="15" x2="1039.5" y2="19.5"/><line x1="1046.5" y1="4" x2="1046.5" y2="19.5"/><line x1="1052.5" y1="15" x2="1052.5" y2="19.5"/><line x1="1059.5" y1="12" x2="1059.5" y2="19.5"/><line x1="1065.5" y1="15" x2="1065.5" y2="19.5"/><line x1="1072.5" y1="12" x2="1072.5" y2="19.5"/><line x1="1079.5" y1="15" x2="1079.5" y2="19.5"/><line x1="0" y1="19.5" x2="1087" y2="19.5"/></g><g font-family="Liberation Sans" font-size="11" fill="#3a3a3a"><text x="-11" y="13">-450</text><text x="55" y="13">-400</text><text x="121" y="13">-350</text><text x="188" y="13">-300</text><text x="254" y="13">-250</text><text x="320" y="13">-200</text><text x="386" y="13">-150</text><text x="452" y="13">-100</text><text x="518" y="13">-50</text><text x="585" y="13">0</text><text x="651" y="13">50</text><text x="717" y="13">100</text><text x="783" y="13">150</text><text x="849" y="13">200</text><text x="915" y="13">250</text><text x="981" y="13">300</text><text x="1048" y="13">350</text></g><path d="M577,14 h12 l-6,6 z" fill="#333"/></svg>
<svg class="a" style="left:110px;top:146px" width="19" height="739" viewBox="0 0 19 739"><g stroke="#3a3a3a" stroke-width="1" shape-rendering="crispEdges"><line x1="14" y1="726.5" x2="18.5" y2="726.5"/><line x1="11" y1="713.5" x2="18.5" y2="713.5"/><line x1="14" y1="699.5" x2="18.5" y2="699.5"/><line x1="3" y1="686.5" x2="18.5" y2="686.5"/><line x1="14" y1="673.5" x2="18.5" y2="673.5"/><line x1="11" y1="660.5" x2="18.5" y2="660.5"/><line x1="14" y1="646.5" x2="18.5" y2="646.5"/><line x1="11" y1="633.5" x2="18.5" y2="633.5"/><line x1="14" y1="620.5" x2="18.5" y2="620.5"/><line x1="11" y1="607.5" x2="18.5" y2="607.5"/><line x1="14" y1="593.5" x2="18.5" y2="593.5"/><line x1="11" y1="580.5" x2="18.5" y2="580.5"/><line x1="14" y1="567.5" x2="18.5" y2="567.5"/><line x1="3" y1="554.5" x2="18.5" y2="554.5"/><line x1="14" y1="540.5" x2="18.5" y2="540.5"/><line x1="11" y1="527.5" x2="18.5" y2="527.5"/><line x1="14" y1="514.5" x2="18.5" y2="514.5"/><line x1="11" y1="501.5" x2="18.5" y2="501.5"/><line x1="14" y1="488.5" x2="18.5" y2="488.5"/><line x1="11" y1="474.5" x2="18.5" y2="474.5"/><line x1="14" y1="461.5" x2="18.5" y2="461.5"/><line x1="11" y1="448.5" x2="18.5" y2="448.5"/><line x1="14" y1="435.5" x2="18.5" y2="435.5"/><line x1="3" y1="421.5" x2="18.5" y2="421.5"/><line x1="14" y1="408.5" x2="18.5" y2="408.5"/><line x1="11" y1="395.5" x2="18.5" y2="395.5"/><line x1="14" y1="382.5" x2="18.5" y2="382.5"/><line x1="11" y1="368.5" x2="18.5" y2="368.5"/><line x1="14" y1="355.5" x2="18.5" y2="355.5"/><line x1="11" y1="342.5" x2="18.5" y2="342.5"/><line x1="14" y1="329.5" x2="18.5" y2="329.5"/><line x1="11" y1="315.5" x2="18.5" y2="315.5"/><line x1="14" y1="302.5" x2="18.5" y2="302.5"/><line x1="3" y1="289.5" x2="18.5" y2="289.5"/><line x1="14" y1="276.5" x2="18.5" y2="276.5"/><line x1="11" y1="262.5" x2="18.5" y2="262.5"/><line x1="14" y1="249.5" x2="18.5" y2="249.5"/><line x1="11" y1="236.5" x2="18.5" y2="236.5"/><line x1="14" y1="223.5" x2="18.5" y2="223.5"/><line x1="11" y1="209.5" x2="18.5" y2="209.5"/><line x1="14" y1="196.5" x2="18.5" y2="196.5"/><line x1="11" y1="183.5" x2="18.5" y2="183.5"/><line x1="14" y1="170.5" x2="18.5" y2="170.5"/><line x1="3" y1="157.5" x2="18.5" y2="157.5"/><line x1="14" y1="143.5" x2="18.5" y2="143.5"/><line x1="11" y1="130.5" x2="18.5" y2="130.5"/><line x1="14" y1="117.5" x2="18.5" y2="117.5"/><line x1="11" y1="104.5" x2="18.5" y2="104.5"/><line x1="14" y1="90.5" x2="18.5" y2="90.5"/><line x1="11" y1="77.5" x2="18.5" y2="77.5"/><line x1="14" y1="64.5" x2="18.5" y2="64.5"/><line x1="11" y1="51.5" x2="18.5" y2="51.5"/><line x1="14" y1="37.5" x2="18.5" y2="37.5"/><line x1="3" y1="24.5" x2="18.5" y2="24.5"/><line x1="14" y1="11.5" x2="18.5" y2="11.5"/><line x1="18.5" y1="0" x2="18.5" y2="739"/></g><g font-family="Liberation Sans" font-size="11" fill="#3a3a3a"><line x1="4" y1="690.5" x2="7" y2="690.5" stroke="#3a3a3a"/><text x="3" y="705">1</text><text x="3" y="715">0</text><text x="3" y="725">0</text><text x="3" y="564">0</text><text x="3" y="431">1</text><text x="3" y="441">0</text><text x="3" y="451">0</text><text x="3" y="299">2</text><text x="3" y="309">0</text><text x="3" y="319">0</text><text x="3" y="167">3</text><text x="3" y="177">0</text><text x="3" y="187">0</text><text x="3" y="34">4</text><text x="3" y="44">0</text><text x="3" y="54">0</text></g><path d="M13,547 v11 l5.5,-5.5 z" fill="#333"/></svg>
</body></html>
